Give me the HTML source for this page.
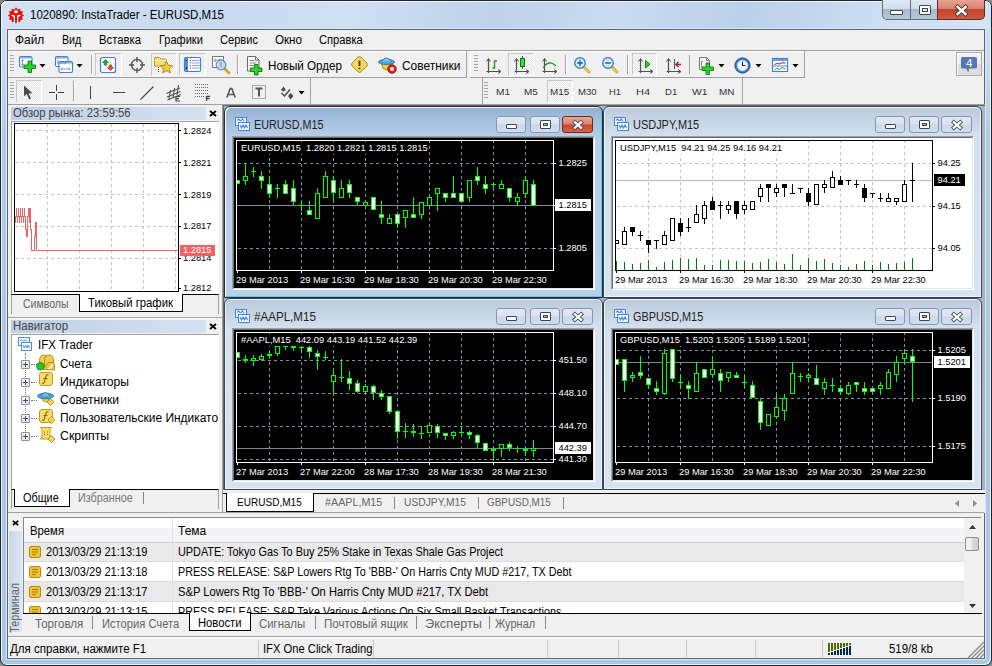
<!DOCTYPE html><html><head><meta charset="utf-8"><style>
html,body{margin:0;padding:0;width:992px;height:666px;overflow:hidden;background:#8a8a8a;}
body{position:relative;font-family:"Liberation Sans",sans-serif;font-size:11px;color:#000;}
div{position:absolute;box-sizing:border-box;}
.t{white-space:nowrap;line-height:13px;}
svg{position:absolute;overflow:visible;}
</style></head><body>
<div style="left:0px;top:0px;width:992px;height:666px;background:linear-gradient(#d0e1f3 0px,#c8dbf0 60px,#afcae7 140px,#abc7e5 100%);border:1px solid #1b2432;border-radius:7px;box-shadow:inset 1px 1px 0 #eef6fd,inset -1px -1px 0 #eef6fd;"></div>
<div style="left:1px;top:1px;width:990px;height:28px;background:linear-gradient(100deg,#d2e2f4 0%,#c6d9ef 20%,#cfe0f3 35%,#bcd2eb 50%,#c9dcf1 62%,#b9d0ea 75%,#cde0f4 90%,#d3e4f6 100%);border-radius:6px 6px 0 0;box-shadow:inset 1px 1px 0 #f4f8fc;"></div>
<svg style="left:7px;top:6px" width="18" height="19" viewBox="0 0 18 19">
<polygon points="9.00,1.30 10.60,3.51 13.10,2.40 13.38,5.12 16.10,5.40 14.99,7.90 17.20,9.50 14.99,11.10 16.10,13.60 13.38,13.88 13.10,16.60 10.60,15.49 9.00,17.70 7.40,15.49 4.90,16.60 4.62,13.88 1.90,13.60 3.01,11.10 0.80,9.50 3.01,7.90 1.90,5.40 4.62,5.12 4.90,2.40 7.40,3.51" fill="#e8140c"/>
<ellipse cx="9" cy="5.6" rx="1.9" ry="1.7" fill="#fff"/>
<path d="M3.8 9.2 Q6.5 8.2 8 10 V17 H6.8 V11.5 Q5.8 10.2 3.8 9.2 Z M14.2 9.2 Q11.5 8.2 10 10 V17 H11.2 V11.5 Q12.2 10.2 14.2 9.2 Z" fill="#fff"/>
</svg>
<div class="t" style="left:30px;top:8px;font-size:12px;line-height:14px;color:#000;transform:scaleX(0.9589);transform-origin:0 0;">1020890: InstaTrader - EURUSD,M15</div>
<div style="left:882px;top:0px;width:56px;height:20px;background:linear-gradient(#dfe9f5 0%,#cfdcec 45%,#a8b9cd 50%,#b8c8da 100%);border:1px solid #5f6e80;border-top:none;border-radius:0 0 0 5px;"></div>
<div style="left:910px;top:0px;width:1px;height:19px;background:#5f6e80"></div>
<div style="left:890px;top:10px;width:13px;height:5px;background:#fff;border:1px solid #3b4556;border-radius:1px"></div>
<div style="left:919px;top:5px;width:12px;height:10px;background:#fff;border:1px solid #3b4556;border-radius:1px"></div>
<div style="left:922px;top:8px;width:6px;height:4px;background:#dfe8f4;border:1px solid #3b4556;"></div>
<div style="left:937px;top:0px;width:48px;height:20px;background:linear-gradient(#e8a395 0%,#d9826f 45%,#c4432a 50%,#d05a3f 100%);border:1px solid #5f2e24;border-top:none;border-radius:0 0 5px 0;"></div>
<svg style="left:955px;top:5px" width="13" height="11" viewBox="0 0 13 11">
<path d="M2.5 2 L10.5 9 M10.5 2 L2.5 9" stroke="#3a3a3a" stroke-width="4.2" stroke-linecap="square"/>
<path d="M2.5 2 L10.5 9 M10.5 2 L2.5 9" stroke="#fff" stroke-width="2.4" stroke-linecap="square"/></svg>
<div style="left:6px;top:28px;width:980px;height:632px;border:1px solid #dbe8f6;"></div>
<div style="left:7px;top:29px;width:978px;height:630px;background:#f0f0f0;border:1px solid #5b6777;"></div>
<div style="left:983px;top:105px;width:1px;height:385px;background:#fff"></div>
<div class="t" style="left:15px;top:33px;font-size:12px;line-height:14px;transform:scaleX(0.9898);transform-origin:0 0;">Файл</div>
<div class="t" style="left:62px;top:33px;font-size:12px;line-height:14px;transform:scaleX(0.8844);transform-origin:0 0;">Вид</div>
<div class="t" style="left:99px;top:33px;font-size:12px;line-height:14px;transform:scaleX(0.9417);transform-origin:0 0;">Вставка</div>
<div class="t" style="left:158.5px;top:33px;font-size:12px;line-height:14px;transform:scaleX(0.9182);transform-origin:0 0;">Графики</div>
<div class="t" style="left:219.5px;top:33px;font-size:12px;line-height:14px;transform:scaleX(0.9247);transform-origin:0 0;">Сервис</div>
<div class="t" style="left:274.5px;top:33px;font-size:12px;line-height:14px;transform:scaleX(0.9683);transform-origin:0 0;">Окно</div>
<div class="t" style="left:318.5px;top:33px;font-size:12px;line-height:14px;transform:scaleX(0.9283);transform-origin:0 0;">Справка</div>
<div style="left:8px;top:50px;width:976px;height:1px;background:#a0a0a0"></div>
<div style="left:8px;top:104px;width:976px;height:1px;background:#a0a0a0"></div>
<div style="left:8px;top:51px;width:459px;height:27px;border-right:1px solid #a0a0a0;border-bottom:1px solid #a0a0a0;box-shadow:inset 1px 1px 0 #fff;"></div>
<div style="left:10px;top:55px;width:4px;height:18px"><div style="left:0;top:0px;width:4px;height:1px;background:#a5a5a5"></div><div style="left:0;top:3px;width:4px;height:1px;background:#a5a5a5"></div><div style="left:0;top:6px;width:4px;height:1px;background:#a5a5a5"></div><div style="left:0;top:9px;width:4px;height:1px;background:#a5a5a5"></div><div style="left:0;top:12px;width:4px;height:1px;background:#a5a5a5"></div><div style="left:0;top:15px;width:4px;height:1px;background:#a5a5a5"></div></div>
<svg style="left:19px;top:56px" width="19" height="18" viewBox="0 0 19 18">
<rect x="0.5" y="0.5" width="12.5" height="10.5" rx="1.5" fill="#fff" stroke="#3b7fd6" stroke-width="1.1"/>
<rect x="1" y="1" width="11.5" height="1.6" fill="#8ab6ea"/>
<path d="M3.5 3.5 v6 M2.3 4.8 l1.2-1.3 1.2 1.3 M2.3 8.2 l1.2 1.3 1.2-1.3" stroke="#7a8aa0" stroke-width=".9" fill="none"/>
<path d="M9 5 h3.5 v4 h4 v3.5 h-4 v4 h-3.5 v-4 h-4 v-3.5 h4 z" fill="#2fd02f" stroke="#0e7a0e" stroke-width=".9"/>
</svg>
<svg style="left:39px;top:64px" width="7" height="4"><path d="M0.5 0 L6.5 0 L3.5 3.5 Z" fill="#000"/></svg>
<svg style="left:55px;top:56px" width="19" height="18" viewBox="0 0 19 18">
<rect x="0.5" y="0.5" width="12.5" height="10" rx="1.5" fill="#fff" stroke="#3b7fd6" stroke-width="1.1"/>
<rect x="1" y="1" width="11.5" height="1.6" fill="#8ab6ea"/>
<rect x="4" y="5.5" width="13.5" height="11" rx="1.5" fill="#fff" stroke="#3b7fd6" stroke-width="1.1"/>
<rect x="4.5" y="6" width="12.5" height="1.6" fill="#8ab6ea"/>
<path d="M3 3.5 v4 M2 7 h9 M9.5 5.8 l1.5 1.2 -1.5 1.2" stroke="#7a8aa0" stroke-width=".9" fill="none"/>
<path d="M6 13 h9 M7.2 11.8 l-1.2 1.2 1.2 1.2 M13.8 11.8 l1.2 1.2 -1.2 1.2" stroke="#7a8aa0" stroke-width=".9" fill="none"/>
</svg>
<svg style="left:76px;top:64px" width="7" height="4"><path d="M0.5 0 L6.5 0 L3.5 3.5 Z" fill="#000"/></svg>
<div style="left:91px;top:55px;width:1px;height:19px;background:#a0a0a0"></div>
<div style="left:92px;top:55px;width:1px;height:19px;background:#fff"></div>
<div style="left:95px;top:53px;width:27px;height:23px;background:#f7f7f7;border:1px solid #c8c8c8;border-right-color:#fff;border-bottom-color:#fff;background-image:repeating-conic-gradient(#e6e6e6 0 25%,#fbfbfb 0 50%);background-size:2px 2px;"></div>
<svg style="left:100px;top:57px" width="16" height="16" viewBox="0 0 16 16">
<rect x="0.5" y="0.5" width="15" height="15" rx="2" fill="#fff" stroke="#3b7fd6" stroke-width="1.2"/>
<path d="M3 6 h9 M3 9 h9 M3 12 h9" stroke="#dde6f0" stroke-width="1"/>
<path d="M5.5 2.5 L8.5 5.5 H6.7 V8 H4.3 V5.5 H2.5 Z" fill="#22b022" stroke="#107a10" stroke-width=".7"/>
<path d="M10.5 13.5 L13.5 10.5 H11.7 V8 H9.3 V10.5 H7.5 Z" fill="#e8502a" stroke="#b02a10" stroke-width=".7"/>
</svg>
<svg style="left:128px;top:56px" width="18" height="18" viewBox="0 0 18 18">
<circle cx="9" cy="9" r="5.5" fill="none" stroke="#555" stroke-width="1.4"/>
<path d="M9 1 V6 M9 12 V17 M1 9 H6 M12 9 H17" stroke="#555" stroke-width="1.4"/></svg>
<div style="left:151px;top:53px;width:26px;height:23px;background:#f7f7f7;border:1px solid #c8c8c8;border-right-color:#fff;border-bottom-color:#fff;background-image:repeating-conic-gradient(#e6e6e6 0 25%,#fbfbfb 0 50%);background-size:2px 2px;"></div>
<svg style="left:154px;top:55px" width="20" height="20" viewBox="0 0 20 20">
<path d="M0.5 2.5 h5 l1.5 1.5 h5 v7 h-11.5 z" fill="#f6dc7a" stroke="#c59a2c" stroke-width="1"/>
<path d="M0.5 5.5 h11.5" stroke="#fff3c0" stroke-width="1"/>
<path d="M4.5 12 v6" stroke="#333" stroke-width="1" stroke-dasharray="1 1"/>
<path d="M12.5 6.5 l1.9 3.8 4.2 .5 -3.1 2.9 .8 4.1 -3.8-2.1 -3.8 2.1 .8-4.1 -3.1-2.9 4.2-.5z" fill="#f2cd3a" stroke="#a8800e" stroke-width=".9"/>
</svg>
<div style="left:179px;top:53px;width:27px;height:23px;background:#f7f7f7;border:1px solid #c8c8c8;border-right-color:#fff;border-bottom-color:#fff;background-image:repeating-conic-gradient(#e6e6e6 0 25%,#fbfbfb 0 50%);background-size:2px 2px;"></div>
<svg style="left:184px;top:57px" width="18" height="16" viewBox="0 0 18 16">
<rect x="0.5" y="0.5" width="16" height="14" rx="1.5" fill="#fff" stroke="#3d7fd2" stroke-width="1.2"/>
<rect x="1" y="1" width="3" height="13" fill="#4d8ee0"/>
<path d="M2.5 3 v1 M2.5 10 v2" stroke="#222" stroke-width="1"/>
<path d="M6 3.5 h1 M6 6 h1 M6 8.5 h1 M6 11 h1" stroke="#d22" stroke-width="1.2"/>
<path d="M8 3.5 h7.5 M8 6 h7.5 M8 8.5 h7.5 M8 11 h7.5" stroke="#7fa6d6" stroke-width="1"/></svg>
<svg style="left:212px;top:56px" width="19" height="19" viewBox="0 0 19 19">
<rect x="0.5" y="0.5" width="11" height="11" fill="#fff" stroke="#777" stroke-width="1"/>
<path d="M3 2.5 v4 M8 2.5 v4 M2.5 4 h7" stroke="#777" stroke-width=".8"/>
<path d="M12.5 12.5 L17 17" stroke="#d4a017" stroke-width="2.6" stroke-linecap="round"/>
<circle cx="9" cy="9" r="4.8" fill="#cfe4f7" fill-opacity=".8" stroke="#4f8fd6" stroke-width="1.3"/>
<rect x="7.5" y="6" width="2.5" height="5" fill="#8fb0d0"/></svg>
<div style="left:237px;top:55px;width:1px;height:19px;background:#a0a0a0"></div>
<div style="left:238px;top:55px;width:1px;height:19px;background:#fff"></div>
<svg style="left:247px;top:56px" width="17" height="19" viewBox="0 0 17 19">
<path d="M0.5 0.5 h8 l3.5 3.5 v11 h-11.5 z" fill="#fafafa" stroke="#6a6a6a" stroke-width="1"/>
<path d="M8.5 0.5 v3.5 h3.5" stroke="#6a6a6a" fill="none"/>
<path d="M2.5 4.5 h5 M2.5 7 h7 M2.5 9.5 h4" stroke="#8a8a8a" stroke-width="1"/>
<path d="M7.5 8.5 h3.5 v3.5 h4 v3.5 h-4 v3.5 h-3.5 v-3.5 h-4 v-3.5 h4 z" fill="#2fcf2f" stroke="#0e7a0e" stroke-width=".9"/></svg>
<div class="t" style="left:267.5px;top:59px;font-size:12px;line-height:14px;transform:scaleX(0.9678);transform-origin:0 0;">Новый Ордер</div>
<svg style="left:351px;top:56px" width="17" height="17" viewBox="0 0 17 17">
<path d="M7 1.2 Q8.5 0 10 1.2 L15.8 7 Q17 8.5 15.8 10 L10 15.8 Q8.5 17 7 15.8 L1.2 10 Q0 8.5 1.2 7 Z" fill="#f6d85a" stroke="#a98512" stroke-width="1"/>
<path d="M8.5 4.5 V10" stroke="#3a3a3a" stroke-width="1.8"/><path d="M8.5 11.6 V13.2" stroke="#3a3a3a" stroke-width="1.8"/></svg>
<svg style="left:378px;top:55px" width="19" height="19" viewBox="0 0 19 19">
<path d="M3.5 8.5 h11 l-1.5 5 q-4 3 -8 0z" fill="#f5d245" stroke="#a98512" stroke-width=".9"/>
<ellipse cx="8.5" cy="7" rx="8" ry="2.6" fill="#4aa3dc" stroke="#1d6aa0" stroke-width=".8"/>
<path d="M3.5 6.5 q5-7 10 0" fill="#7cc4f0" stroke="#1d6aa0" stroke-width=".8"/>
<circle cx="14" cy="14" r="4.3" fill="#e01e1e" stroke="#9a1010" stroke-width=".8"/>
<rect x="12.3" y="12.3" width="3.4" height="3.4" fill="#fff"/></svg>
<div class="t" style="left:402px;top:59px;font-size:12px;line-height:14px;transform:scaleX(0.9943);transform-origin:0 0;">Советники</div>
<div style="left:470px;top:51px;width:335px;height:27px;border-right:1px solid #a0a0a0;border-bottom:1px solid #a0a0a0;box-shadow:inset 1px 1px 0 #fff;"></div>
<div style="left:474px;top:55px;width:4px;height:18px"><div style="left:0;top:0px;width:4px;height:1px;background:#a5a5a5"></div><div style="left:0;top:3px;width:4px;height:1px;background:#a5a5a5"></div><div style="left:0;top:6px;width:4px;height:1px;background:#a5a5a5"></div><div style="left:0;top:9px;width:4px;height:1px;background:#a5a5a5"></div><div style="left:0;top:12px;width:4px;height:1px;background:#a5a5a5"></div><div style="left:0;top:15px;width:4px;height:1px;background:#a5a5a5"></div></div>
<svg style="left:486px;top:58px" width="16" height="16" viewBox="0 0 16 16">
<path d="M2.5 1 V15 M0.5 13.5 H14" stroke="#505050" stroke-width="1.2" fill="none"/>
<path d="M0.5 3.5 L2.5 0.5 L4.5 3.5 M12 11.5 L15 13.5 L12 15.5" stroke="#505050" stroke-width="1" fill="none"/></svg>
<svg style="left:492px;top:60px" width="6" height="9"><path d="M0.5 8 H2.5 V1 H5" stroke="#1f9a1f" stroke-width="1.4" fill="none"/></svg>
<div style="left:508px;top:53px;width:26px;height:23px;background:#f7f7f7;border:1px solid #c8c8c8;border-right-color:#fff;border-bottom-color:#fff;background-image:repeating-conic-gradient(#e6e6e6 0 25%,#fbfbfb 0 50%);background-size:2px 2px;"></div>
<svg style="left:514px;top:58px" width="16" height="16" viewBox="0 0 16 16">
<path d="M2.5 1 V15 M0.5 13.5 H14" stroke="#505050" stroke-width="1.2" fill="none"/>
<path d="M0.5 3.5 L2.5 0.5 L4.5 3.5 M12 11.5 L15 13.5 L12 15.5" stroke="#505050" stroke-width="1" fill="none"/></svg>
<svg style="left:519px;top:56px" width="7" height="14"><path d="M3.5 0 V13" stroke="#0d7a0d" stroke-width="1"/><rect x="1.5" y="2.5" width="4" height="8" fill="#3fdc3f" stroke="#0d7a0d" stroke-width="1"/></svg>
<svg style="left:542px;top:58px" width="16" height="16" viewBox="0 0 16 16">
<path d="M2.5 1 V15 M0.5 13.5 H14" stroke="#505050" stroke-width="1.2" fill="none"/>
<path d="M0.5 3.5 L2.5 0.5 L4.5 3.5 M12 11.5 L15 13.5 L12 15.5" stroke="#505050" stroke-width="1" fill="none"/></svg>
<svg style="left:542px;top:61px" width="15" height="8"><path d="M1 7 Q7 -2 14 5" stroke="#2a9a2a" stroke-width="1.3" fill="none"/></svg>
<div style="left:565px;top:55px;width:1px;height:19px;background:#a0a0a0"></div>
<div style="left:566px;top:55px;width:1px;height:19px;background:#fff"></div>
<svg style="left:574px;top:57px" width="17" height="17" viewBox="0 0 17 17">
<path d="M9.5 9.5 L15 15" stroke="#c89a10" stroke-width="2.8" stroke-linecap="round"/>
<path d="M9.5 9.5 L15 15" stroke="#f2d250" stroke-width="1.2" stroke-linecap="round"/>
<circle cx="6" cy="6" r="5.2" fill="#d8ecfc" stroke="#3b7fd0" stroke-width="1.4"/><path d="M3.3 6 H8.7 M6 3.3 V8.7" stroke="#2f72c0" stroke-width="1.8"/></svg>
<svg style="left:602px;top:57px" width="17" height="17" viewBox="0 0 17 17">
<path d="M9.5 9.5 L15 15" stroke="#c89a10" stroke-width="2.8" stroke-linecap="round"/>
<path d="M9.5 9.5 L15 15" stroke="#f2d250" stroke-width="1.2" stroke-linecap="round"/>
<circle cx="6" cy="6" r="5.2" fill="#d8ecfc" stroke="#3b7fd0" stroke-width="1.4"/><path d="M3.3 6 H8.7" stroke="#2f72c0" stroke-width="1.8"/></svg>
<div style="left:627px;top:55px;width:1px;height:19px;background:#a0a0a0"></div>
<div style="left:628px;top:55px;width:1px;height:19px;background:#fff"></div>
<div style="left:632px;top:53px;width:25px;height:22px;background:#f7f7f7;border:1px solid #c8c8c8;border-right-color:#fff;border-bottom-color:#fff;background-image:repeating-conic-gradient(#e6e6e6 0 25%,#fbfbfb 0 50%);background-size:2px 2px;"></div>
<svg style="left:638px;top:58px" width="16" height="16" viewBox="0 0 16 16">
<path d="M2.5 1 V15 M0.5 13.5 H14" stroke="#505050" stroke-width="1.2" fill="none"/>
<path d="M0.5 3.5 L2.5 0.5 L4.5 3.5 M12 11.5 L15 13.5 L12 15.5" stroke="#505050" stroke-width="1" fill="none"/></svg>
<svg style="left:645px;top:60px" width="6" height="9"><path d="M0.5 0.5 L5 4.2 L0.5 8 Z" fill="#30d030" stroke="#108a10" stroke-width="1"/></svg>
<svg style="left:666px;top:58px" width="16" height="16" viewBox="0 0 16 16">
<path d="M2.5 1 V15 M0.5 13.5 H14" stroke="#505050" stroke-width="1.2" fill="none"/>
<path d="M0.5 3.5 L2.5 0.5 L4.5 3.5 M12 11.5 L15 13.5 L12 15.5" stroke="#505050" stroke-width="1" fill="none"/></svg>
<div style="left:674px;top:59px;width:1px;height:10px;background:#1f5f9a"></div>
<svg style="left:675px;top:61px" width="6" height="7"><path d="M6 3.5 H1.5 M3.5 1 L0.8 3.5 L3.5 6" stroke="#d01818" stroke-width="1.4" fill="none"/></svg>
<div style="left:689px;top:55px;width:1px;height:19px;background:#a0a0a0"></div>
<div style="left:690px;top:55px;width:1px;height:19px;background:#fff"></div>
<svg style="left:699px;top:57px" width="17" height="18" viewBox="0 0 17 18">
<path d="M0.5 0.5 h7 l3 3 v9 h-10 z" fill="#fafafa" stroke="#777" stroke-width="1"/>
<path d="M7.5 0.5 v3 h3" stroke="#777" fill="none"/>
<path d="M2.5 4 v6 M2 4.5 h2" stroke="#888" stroke-width=".9"/>
<path d="M7 6 h3.5 v4 h4 v3.5 h-4 v4 h-3.5 v-4 h-4 v-3.5 h4 z" fill="#2fcf2f" stroke="#0e7a0e" stroke-width=".9"/></svg>
<svg style="left:718px;top:64px" width="7" height="4"><path d="M0.5 0 L6.5 0 L3.5 3.5 Z" fill="#000"/></svg>
<svg style="left:734px;top:57px" width="17" height="17" viewBox="0 0 17 17">
<circle cx="8.5" cy="8.5" r="7.6" fill="#2f7ad0" stroke="#164e8e" stroke-width="1"/>
<circle cx="8.5" cy="8.5" r="5.4" fill="#f4f8fc" stroke="#9cc4ee" stroke-width=".8"/>
<path d="M8.5 4.5 V8.5 H11.5" stroke="#222" stroke-width="1.1" fill="none"/></svg>
<svg style="left:755px;top:64px" width="7" height="4"><path d="M0.5 0 L6.5 0 L3.5 3.5 Z" fill="#000"/></svg>
<svg style="left:772px;top:58px" width="17" height="15" viewBox="0 0 17 15">
<rect x="0.5" y="0.5" width="15" height="13" fill="#fff" stroke="#3d7fd2" stroke-width="1.1"/>
<rect x="1" y="1" width="14" height="2" fill="#6aa0e0"/>
<path d="M1 8 H15" stroke="#3d7fd2" stroke-width=".9"/>
<path d="M2.5 6.5 L5 5.5 L7.5 6 L10 4.8 L13.5 5" stroke="#b01818" stroke-width="1" fill="none"/>
<path d="M2.5 11.5 L5 10.5 L7.5 11.5 L10 9.5 L13.5 11" stroke="#2aa02a" stroke-width="1" fill="none"/></svg>
<svg style="left:792px;top:64px" width="7" height="4"><path d="M0.5 0 L6.5 0 L3.5 3.5 Z" fill="#000"/></svg>
<div style="left:956px;top:52px;width:26px;height:24px;background:linear-gradient(#f2f2f2 0%,#ededed 50%,#dcdcdc 51%,#e0e0e0 100%);border:1px solid #a9a9a9;box-shadow:inset 1px 1px 0 #fff;"></div>
<svg style="left:961px;top:57px" width="17" height="16" viewBox="0 0 17 16">
<path d="M1.5 0 H14.5 Q16 0 16 1.5 V10 Q16 11.5 14.5 11.5 H8 L7.5 15.5 L5 11.5 H1.5 Q0 11.5 0 10 V1.5 Q0 0 1.5 0 Z" fill="#5876b4"/></svg>
<div class="t" style="left:966px;top:57px;color:#fff;font-size:11.5px;line-height:12px;">4</div>
<div style="left:8px;top:78px;width:303px;height:26px;border-right:1px solid #a0a0a0;"></div>
<div style="left:10px;top:82px;width:4px;height:18px"><div style="left:0;top:0px;width:4px;height:1px;background:#a5a5a5"></div><div style="left:0;top:3px;width:4px;height:1px;background:#a5a5a5"></div><div style="left:0;top:6px;width:4px;height:1px;background:#a5a5a5"></div><div style="left:0;top:9px;width:4px;height:1px;background:#a5a5a5"></div><div style="left:0;top:12px;width:4px;height:1px;background:#a5a5a5"></div><div style="left:0;top:15px;width:4px;height:1px;background:#a5a5a5"></div></div>
<div style="left:16px;top:80px;width:26px;height:23px;background:#f7f7f7;border:1px solid #c8c8c8;border-right-color:#fff;border-bottom-color:#fff;background-image:repeating-conic-gradient(#e6e6e6 0 25%,#fbfbfb 0 50%);background-size:2px 2px;"></div>
<svg style="left:23px;top:85px" width="11" height="15" viewBox="0 0 11 15">
<path d="M1 0.5 L1 11.5 L3.6 9 L6.2 14.5 L8 13.6 L5.6 8.4 L9.5 8.2 Z" fill="#4a4a4a"/></svg>
<div style="left:56px;top:85px;width:1px;height:6px;background:#3c3c3c"></div>
<div style="left:56px;top:94px;width:1px;height:6px;background:#3c3c3c"></div>
<div style="left:49px;top:92px;width:6px;height:1px;background:#3c3c3c"></div>
<div style="left:58px;top:92px;width:6px;height:1px;background:#3c3c3c"></div>
<div style="left:73px;top:81px;width:1px;height:20px;background:#a0a0a0"></div>
<div style="left:74px;top:81px;width:1px;height:20px;background:#fff"></div>
<div style="left:90px;top:86px;width:1px;height:13px;background:#444"></div>
<div style="left:113px;top:92px;width:12px;height:1px;background:#444"></div>
<svg style="left:140px;top:86px" width="14" height="14"><path d="M0.5 13.5 L13.5 0.5" stroke="#444" stroke-width="1.1"/></svg>
<svg style="left:166px;top:84px" width="18" height="18" viewBox="0 0 18 18">
<path d="M0.5 9.5 L14 4 M1 13 L14.5 7.5 M1.5 16 L15 10.5" stroke="#505050" stroke-width="1.1"/>
<path d="M4.5 6 L3 15 M8.5 4 L7 14 M12.5 1 L11 11" stroke="#505050" stroke-width="1.1"/>
<path d="M10 12.5 h4 M10 12.5 v4.5 h4 M10 14.7 h3" stroke="#444" stroke-width="1.2" fill="none"/></svg>
<svg style="left:195px;top:84px" width="16" height="18" viewBox="0 0 16 18">
<path d="M0 0.5 H14 M0 3.5 H14 M0 6.5 H14 M0 9.5 H14 M0 12.5 H10" stroke="#6a6a6a" stroke-width="1" stroke-dasharray="1 1"/>
<path d="M11.5 12 v5 M11.5 12.5 h3.5 M11.5 14.7 h3" stroke="#444" stroke-width="1.3" fill="none"/></svg>
<svg style="left:226px;top:88px" width="10" height="10" viewBox="0 0 10 10">
<path d="M0.8 9.5 L4.2 0.5 H5.8 L9.2 9.5 M2.3 6.5 H7.7" stroke="#555" stroke-width="1.6" fill="none"/></svg>
<svg style="left:252px;top:85px" width="14" height="15" viewBox="0 0 14 15">
<rect x="0.5" y="0.5" width="13" height="13" fill="none" stroke="#666" stroke-width="1" stroke-dasharray="1 1"/>
<path d="M3.5 3.5 H10.5 M7 3.5 V11.5" stroke="#555" stroke-width="2"/></svg>
<svg style="left:280px;top:86px" width="15" height="14" viewBox="0 0 15 14">
<path d="M1 4 L3.5 0.5 L6 4 L3.5 5.5 Z M8 10 L10.5 7 L13.5 10 L10.5 13.5 Z" fill="#4a4a4a"/>
<path d="M1.5 7 L4.5 10 L10 3.5" stroke="#4a4a4a" stroke-width="1.5" fill="none"/></svg>
<svg style="left:298px;top:91px" width="7" height="4"><path d="M0.5 0 L6.5 0 L3.5 3.5 Z" fill="#000"/></svg>
<div style="left:482px;top:78px;width:261px;height:26px;border-left:1px solid #a0a0a0;border-right:1px solid #a0a0a0;"></div>
<div style="left:484px;top:82px;width:4px;height:18px"><div style="left:0;top:0px;width:4px;height:1px;background:#a5a5a5"></div><div style="left:0;top:3px;width:4px;height:1px;background:#a5a5a5"></div><div style="left:0;top:6px;width:4px;height:1px;background:#a5a5a5"></div><div style="left:0;top:9px;width:4px;height:1px;background:#a5a5a5"></div><div style="left:0;top:12px;width:4px;height:1px;background:#a5a5a5"></div><div style="left:0;top:15px;width:4px;height:1px;background:#a5a5a5"></div></div>
<div style="left:547px;top:80px;width:26px;height:23px;background:#f7f7f7;border:1px solid #c8c8c8;border-right-color:#fff;border-bottom-color:#fff;background-image:repeating-conic-gradient(#e6e6e6 0 25%,#fbfbfb 0 50%);background-size:2px 2px;"></div>
<div class="t" style="left:495.7px;top:86px;font-size:9.8px;line-height:12px;color:#333;transform:scaleX(1.0357);transform-origin:0 0;">M1</div>
<div class="t" style="left:524.0px;top:86px;font-size:9.8px;line-height:12px;color:#333;transform:scaleX(1.0136);transform-origin:0 0;">M5</div>
<div class="t" style="left:549.7px;top:86px;font-size:9.8px;line-height:12px;color:#333;transform:scaleX(1.0018);transform-origin:0 0;">M15</div>
<div class="t" style="left:577.5px;top:86px;font-size:9.8px;line-height:12px;color:#333;transform:scaleX(0.9809);transform-origin:0 0;">M30</div>
<div class="t" style="left:609.2px;top:86px;font-size:9.8px;line-height:12px;color:#333;transform:scaleX(0.9579);transform-origin:0 0;">H1</div>
<div class="t" style="left:635.9000000000001px;top:86px;font-size:9.8px;line-height:12px;color:#333;transform:scaleX(1.1255);transform-origin:0 0;">H4</div>
<div class="t" style="left:664.8000000000001px;top:86px;font-size:9.8px;line-height:12px;color:#333;transform:scaleX(0.9738);transform-origin:0 0;">D1</div>
<div class="t" style="left:692.2px;top:86px;font-size:9.8px;line-height:12px;color:#333;transform:scaleX(1.0544);transform-origin:0 0;">W1</div>
<div class="t" style="left:719.2px;top:86px;font-size:9.8px;line-height:12px;color:#333;transform:scaleX(1.0170);transform-origin:0 0;">MN</div>
<div style="left:8px;top:105px;width:214px;height:405px;background:#f0f0f0;"></div>
<div style="left:11px;top:107px;width:195px;height:13px;background:linear-gradient(90deg,#bed0e6,#d5e2f0);"></div>
<div class="t" style="left:12.5px;top:106px;font-size:12px;line-height:14px;color:#444;transform:scaleX(0.9364);transform-origin:0 0;">Обзор рынка: 23:59:56</div>
<svg style="left:209px;top:110px" width="8" height="7"><path d="M1 1 L7 6 M7 1 L1 6" stroke="#000" stroke-width="1.8"/></svg>
<div style="left:11px;top:121px;width:208px;height:173px;background:#fff;border-left:1px solid #a0a0a0;border-top:1px solid #a0a0a0;"></div>
<div class="t" style="left:17px;top:126px;font-size:9.3px;line-height:12px;transform:scaleX(0.9880);transform-origin:0 0;">EURUSD</div>
<div style="left:14px;top:123px;width:165px;height:169px;border:1px solid #000;background:#fff"></div>
<svg style="left:0px;top:0px" width="200" height="300">
<line x1="47.5" y1="124" x2="47.5" y2="290" stroke="#c4c4c4" stroke-dasharray="3 3"/>
<line x1="79.5" y1="124" x2="79.5" y2="290" stroke="#c4c4c4" stroke-dasharray="3 3"/>
<line x1="111.5" y1="124" x2="111.5" y2="290" stroke="#c4c4c4" stroke-dasharray="3 3"/>
<line x1="143.5" y1="124" x2="143.5" y2="290" stroke="#c4c4c4" stroke-dasharray="3 3"/>
<line x1="175.5" y1="124" x2="175.5" y2="290" stroke="#c4c4c4" stroke-dasharray="3 3"/>
<line x1="15" y1="130.5" x2="178" y2="130.5" stroke="#c4c4c4" stroke-dasharray="3 3"/>
<line x1="15" y1="162.5" x2="178" y2="162.5" stroke="#c4c4c4" stroke-dasharray="3 3"/>
<line x1="15" y1="194.5" x2="178" y2="194.5" stroke="#c4c4c4" stroke-dasharray="3 3"/>
<line x1="15" y1="226.5" x2="178" y2="226.5" stroke="#c4c4c4" stroke-dasharray="3 3"/>
<line x1="15" y1="258.5" x2="178" y2="258.5" stroke="#c4c4c4" stroke-dasharray="3 3"/>
<rect x="15" y="216" width="11" height="1" fill="#f26161"/>
<rect x="16" y="208" width="1" height="9" fill="#f26161"/>
<rect x="18" y="208" width="1" height="9" fill="#f26161"/>
<rect x="20" y="208" width="1" height="9" fill="#f26161"/>
<rect x="22" y="208" width="1" height="9" fill="#f26161"/>
<rect x="24" y="208" width="1" height="9" fill="#f26161"/>
<rect x="15" y="216" width="1" height="7" fill="#f26161"/>
<rect x="17" y="216" width="1" height="7" fill="#f26161"/>
<rect x="19" y="216" width="1" height="7" fill="#f26161"/>
<rect x="21" y="216" width="1" height="7" fill="#f26161"/>
<rect x="23" y="216" width="1" height="7" fill="#f26161"/>
<rect x="25" y="216" width="1" height="14" fill="#f26161"/>
<rect x="25" y="229" width="2" height="1" fill="#f26161"/>
<rect x="26" y="229" width="1" height="8" fill="#f26161"/>
<rect x="27" y="216" width="1" height="21" fill="#f26161"/>
<rect x="28" y="208" width="1" height="9" fill="#f26161"/>
<rect x="29" y="208" width="1" height="15" fill="#f26161"/>
<rect x="30" y="208" width="1" height="22" fill="#f26161"/>
<rect x="31" y="229" width="1" height="22" fill="#f26161"/>
<rect x="31" y="250" width="4" height="1" fill="#f26161"/>
<rect x="34" y="236" width="1" height="15" fill="#f26161"/>
<rect x="35" y="222" width="1" height="15" fill="#f26161"/>
<rect x="36" y="222" width="1" height="29" fill="#f26161"/>
<rect x="36" y="250" width="142" height="1" fill="#f26161"/>
</svg>
<div class="t" style="left:183px;top:125px;font-size:9.3px;line-height:12px;">1.2824</div>
<div style="left:179px;top:130px;width:2px;height:1px;background:#000"></div>
<div class="t" style="left:183px;top:157px;font-size:9.3px;line-height:12px;">1.2821</div>
<div style="left:179px;top:162px;width:2px;height:1px;background:#000"></div>
<div class="t" style="left:183px;top:189px;font-size:9.3px;line-height:12px;">1.2819</div>
<div style="left:179px;top:194px;width:2px;height:1px;background:#000"></div>
<div class="t" style="left:183px;top:220px;font-size:9.3px;line-height:12px;">1.2817</div>
<div style="left:179px;top:226px;width:2px;height:1px;background:#000"></div>
<div class="t" style="left:183px;top:252px;font-size:9.3px;line-height:12px;">1.2814</div>
<div style="left:179px;top:258px;width:2px;height:1px;background:#000"></div>
<div class="t" style="left:183px;top:282px;font-size:9.3px;line-height:12px;">1.2812</div>
<div style="left:179px;top:288px;width:2px;height:1px;background:#000"></div>
<div style="left:180px;top:245px;width:35px;height:11px;background:#f26161;"></div>
<div class="t" style="left:183px;top:244px;font-size:9.3px;line-height:12px;color:#fff">1.2815</div>
<div style="left:11px;top:294px;width:208px;height:20px;background:#f0f0f0;border-top:1px solid #000;border-left:1px solid #a0a0a0;border-right:1px solid #a0a0a0;"></div>
<div style="left:79px;top:294px;width:104px;height:18px;background:#fff;border:1px solid #000;border-top:none;"></div>
<div class="t" style="left:23px;top:297px;font-size:12px;line-height:14px;color:#666;transform:scaleX(0.8767);transform-origin:0 0;">Символы</div>
<div class="t" style="left:87.5px;top:296px;font-size:12px;line-height:14px;transform:scaleX(0.9417);transform-origin:0 0;">Тиковый график</div>
<div style="left:8px;top:317px;width:214px;height:1px;background:#a0a0a0"></div>
<div style="left:8px;top:318px;width:214px;height:1px;background:#fff"></div>
<div style="left:11px;top:320px;width:195px;height:13px;background:linear-gradient(90deg,#bed0e6,#d5e2f0);"></div>
<div class="t" style="left:12.5px;top:319px;font-size:12px;line-height:14px;color:#444;transform:scaleX(0.9540);transform-origin:0 0;">Навигатор</div>
<svg style="left:209px;top:323px" width="8" height="7"><path d="M1 1 L7 6 M7 1 L1 6" stroke="#000" stroke-width="1.8"/></svg>
<div style="left:11px;top:334px;width:208px;height:155px;background:#fff;border-left:1px solid #a0a0a0;border-top:1px solid #a0a0a0;"></div>
<svg style="left:17px;top:336px" width="16" height="16" viewBox="0 0 16 16">
<rect x="1.5" y="1.5" width="11" height="8" fill="#fff" stroke="#4a90e2"/>
<path d="M3 5 l1.5-1.5 1.5 1.5 h1 l1.5-1.5 1.5 2" stroke="#4a90e2" fill="none" stroke-width="1"/>
<rect x="4.5" y="6.5" width="10" height="8" fill="#fff" stroke="#4a90e2"/>
<path d="M6 9 l1.3 3 1.3-3 1.3 3 1.3-3 1.3 3" stroke="#4a90e2" fill="none" stroke-width="1"/></svg>
<div class="t" style="left:38px;top:338px;font-size:12px;line-height:14px;transform:scaleX(0.9632);transform-origin:0 0;">IFX Trader</div>
<div style="left:25px;top:353px;width:1px;height:80px;border-left:1px dotted #777"></div>
<div style="left:21px;top:360px;width:9px;height:9px;border:1px solid #8f8f8f;background:linear-gradient(135deg,#fff,#e2e2e2);border-radius:1px;"></div>
<div style="left:23px;top:364px;width:5px;height:1px;background:#2a4f9a"></div>
<div style="left:25px;top:362px;width:1px;height:5px;background:#2a4f9a"></div>
<div style="left:31px;top:364px;width:6px;height:1px;border-top:1px dotted #777"></div>
<div class="t" style="left:60px;top:357px;font-size:12px;line-height:14px;transform:scaleX(0.9639);transform-origin:0 0;">Счета</div>
<div style="left:21px;top:378px;width:9px;height:9px;border:1px solid #8f8f8f;background:linear-gradient(135deg,#fff,#e2e2e2);border-radius:1px;"></div>
<div style="left:23px;top:382px;width:5px;height:1px;background:#2a4f9a"></div>
<div style="left:25px;top:380px;width:1px;height:5px;background:#2a4f9a"></div>
<div style="left:31px;top:382px;width:6px;height:1px;border-top:1px dotted #777"></div>
<div class="t" style="left:60px;top:375px;font-size:12px;line-height:14px;transform:scaleX(1.0130);transform-origin:0 0;">Индикаторы</div>
<div style="left:21px;top:396px;width:9px;height:9px;border:1px solid #8f8f8f;background:linear-gradient(135deg,#fff,#e2e2e2);border-radius:1px;"></div>
<div style="left:23px;top:400px;width:5px;height:1px;background:#2a4f9a"></div>
<div style="left:25px;top:398px;width:1px;height:5px;background:#2a4f9a"></div>
<div style="left:31px;top:400px;width:6px;height:1px;border-top:1px dotted #777"></div>
<div class="t" style="left:60px;top:393px;font-size:12px;line-height:14px;transform:scaleX(1.0062);transform-origin:0 0;">Советники</div>
<div style="left:21px;top:414px;width:9px;height:9px;border:1px solid #8f8f8f;background:linear-gradient(135deg,#fff,#e2e2e2);border-radius:1px;"></div>
<div style="left:23px;top:418px;width:5px;height:1px;background:#2a4f9a"></div>
<div style="left:25px;top:416px;width:1px;height:5px;background:#2a4f9a"></div>
<div style="left:31px;top:418px;width:6px;height:1px;border-top:1px dotted #777"></div>
<div class="t" style="left:60px;top:411px;font-size:12px;line-height:14px;transform:scaleX(0.9959);transform-origin:0 0;">Пользовательские Индикато</div>
<div style="left:21px;top:432px;width:9px;height:9px;border:1px solid #8f8f8f;background:linear-gradient(135deg,#fff,#e2e2e2);border-radius:1px;"></div>
<div style="left:23px;top:436px;width:5px;height:1px;background:#2a4f9a"></div>
<div style="left:25px;top:434px;width:1px;height:5px;background:#2a4f9a"></div>
<div style="left:31px;top:436px;width:6px;height:1px;border-top:1px dotted #777"></div>
<div class="t" style="left:60px;top:429px;font-size:12px;line-height:14px;transform:scaleX(1.0269);transform-origin:0 0;">Скрипты</div>
<svg style="left:36px;top:353px" width="20" height="18" viewBox="0 0 20 18">
<path d="M3.5 8 q0-6 4.5-6 q4.5 0 4.5 6 v4 h-9z" fill="#f1cd4b" stroke="#b08a10" stroke-width=".9"/>
<path d="M8.5 8 q0-6 4.5-6 q4.5 0 4.5 6 v5 h-9z" fill="#f1cd4b" stroke="#b08a10" stroke-width=".9"/>
<path d="M7 16.5 l5-7 h5 l1.5 2.5 v5z" fill="#e9c23d" stroke="#b08a10" stroke-width=".9"/>
<path d="M12 16 l4-5.5 1.5 1.5 -3 4z" fill="#fff6c8"/>
<ellipse cx="4.3" cy="13.3" rx="3.8" ry="3.7" fill="#2dc52d" stroke="#14861a" stroke-width=".8"/></svg>
<svg style="left:38px;top:371px" width="16" height="16" viewBox="0 0 16 16">
<rect x="1.5" y="1.5" width="13" height="13" rx="2.5" fill="#f7dc6c" stroke="#c49a1a"/>
<path d="M10.5 4 q-1.5-.8-2.3.8 l-2 6.5 q-.6 1.5-2 .9 M5.5 7.5 h4" stroke="#8a6200" stroke-width="1.1" fill="none"/></svg>
<svg style="left:36px;top:389px" width="20" height="18" viewBox="0 0 20 18">
<path d="M6 9 h7 l-1 3 q-2.5 2 -5 0z" fill="#f3d34a" stroke="#b08a10" stroke-width=".8"/>
<ellipse cx="9.5" cy="7" rx="8" ry="2.8" fill="#48a5dc" stroke="#1d6aa0" stroke-width=".8"/>
<path d="M5 7 q4.5-7 9 0" fill="#6ec0ee" stroke="#1d6aa0" stroke-width=".8"/>
<path d="M14.5 9.5 l3.5 3.5 -3.5 3.5 -3.5-3.5z" fill="#f4d35a" stroke="#b8900f" stroke-width=".9"/></svg>
<svg style="left:38px;top:408px" width="18" height="18" viewBox="0 0 18 18">
<rect x="1.5" y="1.5" width="13" height="13" rx="2.5" fill="#f7dc6c" stroke="#c49a1a"/>
<path d="M10.5 4 q-1.5-.8-2.3.8 l-2 6.5 q-.6 1.5-2 .9 M5.5 7.5 h4" stroke="#8a6200" stroke-width="1.1" fill="none"/>
<path d="M13.5 8.5 l3.5 3.5 -3.5 3.5 -3.5-3.5z" fill="#f4d35a" stroke="#b8900f" stroke-width=".9"/></svg>
<svg style="left:38px;top:426px" width="18" height="18" viewBox="0 0 18 18">
<path d="M2.5 1.5 h11 l-1.5 2 v7.5 l1.5 2 h-11 l1.5-2 v-7.5z" fill="#f7dc6c" stroke="#c49a1a"/>
<path d="M6 6 h1 M9 6 h1 M6 8.5 h1 M9 8.5 h1" stroke="#8a6a10" stroke-width="1"/>
<path d="M13.5 9.5 l3.5 3.5 -3.5 3.5 -3.5-3.5z" fill="#f4d35a" stroke="#b8900f" stroke-width=".9"/></svg>
<div style="left:11px;top:489px;width:208px;height:20px;background:#f0f0f0;border-top:1px solid #000;border-left:1px solid #a0a0a0;border-right:1px solid #a0a0a0;"></div>
<div style="left:14px;top:489px;width:56px;height:18px;background:#fff;border:1px solid #000;border-top:none;"></div>
<div class="t" style="left:23px;top:491px;font-size:12px;line-height:14px;transform:scaleX(0.9048);transform-origin:0 0;">Общие</div>
<div class="t" style="left:77.5px;top:491px;font-size:12px;line-height:14px;color:#777;transform:scaleX(0.8994);transform-origin:0 0;">Избранное</div>
<div style="left:143px;top:492px;width:1px;height:12px;background:#888"></div>
<div style="left:222px;top:104px;width:763px;height:386px;background:#aab5c3;border-left:1px solid #a0a0a0;border-top:1px solid #a0a0a0"></div>
<div style="left:223px;top:105px;width:762px;height:1px;background:#696969"></div>
<div style="left:223px;top:105px;width:1px;height:386px;background:#696969"></div>
<div style="left:224px;top:106px;width:379px;height:192px;background:linear-gradient(#93b0d2 0px,#a6c0de 14px,#b6cce7 29px,#bad0ea 100%);border:1px solid #1e2c3c;box-shadow:inset 1px 1px 0 #fff,inset -1px -1px 0 #4fd2f2;border-radius:6px 6px 0 0;"></div>
<svg style="left:235px;top:117px" width="16" height="15" viewBox="0 0 16 15">
<rect x="0.5" y="0.5" width="11" height="8" fill="#fff" stroke="#3b80f0"/>
<path d="M2 3.5 l1.5-1.5 1.5 1.5 h1 l1.5-1.5 1.5 2.5" stroke="#3b80f0" fill="none" stroke-width="1.1"/>
<rect x="3.5" y="5.5" width="11" height="8" fill="#fff" stroke="#3b80f0"/>
<path d="M5 8 l1.5 3 1.5-3 1.5 3 1.5-3 1.5 3" stroke="#3b80f0" fill="none" stroke-width="1.1"/></svg>
<div class="t" style="left:254px;top:118px;font-size:12px;line-height:14px;color:#222;transform:scaleX(0.8972);transform-origin:0 0;">EURUSD,M15</div>
<div style="left:496px;top:116px;width:30px;height:17px;background:linear-gradient(#e2eaf4 0%,#d7e2ef 48%,#c9d8ea 52%,#d2dfee 100%);border:1px solid #8797b0;border-radius:3px;"></div>
<div style="left:506px;top:124px;width:11px;height:5px;background:#fff;border:1px solid #3e4450;border-radius:1px;"></div>
<div style="left:530px;top:116px;width:30px;height:17px;background:linear-gradient(#e2eaf4 0%,#d7e2ef 48%,#c9d8ea 52%,#d2dfee 100%);border:1px solid #8797b0;border-radius:3px;"></div>
<div style="left:540px;top:120px;width:11px;height:9px;background:#fff;border:1px solid #3e4450;border-radius:1px;"></div>
<div style="left:543px;top:123px;width:5px;height:3px;background:#a9bfd8;border:1px solid #3e4450;"></div>
<div style="left:562px;top:116px;width:31px;height:17px;background:linear-gradient(#eaa798 0%,#dd8470 48%,#c9452b 52%,#d9654a 100%);border:1px solid #6e2a1e;border-radius:3px;"></div>
<svg style="left:572px;top:120px" width="12" height="10" viewBox="0 0 12 10">
<path d="M2.8 2.2 L9.2 7.8 M9.2 2.2 L2.8 7.8" stroke="#4a505c" stroke-width="4" stroke-linecap="square"/>
<path d="M2.8 2.2 L9.2 7.8 M9.2 2.2 L2.8 7.8" stroke="#fff" stroke-width="2.2" stroke-linecap="square"/></svg>
<div style="left:232px;top:136px;width:363px;height:154px;border-top:1px solid #a0a0a0;border-left:1px solid #a0a0a0;border-right:1px solid #fff;border-bottom:1px solid #fff;"></div>
<div style="left:233px;top:137px;width:361px;height:152px;background:#000;border-top:1px solid #696969;border-left:1px solid #696969;border-right:1px solid #e3e3e3;border-bottom:1px solid #e3e3e3;"></div>
<svg style="left:236px;top:140px" width="377" height="150">
<rect x="1" y="65" width="317" height="1" fill="#778899"/>
<line x1="33.5" y1="0" x2="33.5" y2="130" stroke="#8090a4" stroke-dasharray="3 3" />
<line x1="65.5" y1="0" x2="65.5" y2="130" stroke="#8090a4" stroke-dasharray="3 3" />
<line x1="97.5" y1="0" x2="97.5" y2="130" stroke="#8090a4" stroke-dasharray="3 3" />
<line x1="129.5" y1="0" x2="129.5" y2="130" stroke="#8090a4" stroke-dasharray="3 3" />
<line x1="161.5" y1="0" x2="161.5" y2="130" stroke="#8090a4" stroke-dasharray="3 3" />
<line x1="193.5" y1="0" x2="193.5" y2="130" stroke="#8090a4" stroke-dasharray="3 3" />
<line x1="225.5" y1="0" x2="225.5" y2="130" stroke="#8090a4" stroke-dasharray="3 3" />
<line x1="257.5" y1="0" x2="257.5" y2="130" stroke="#8090a4" stroke-dasharray="3 3" />
<line x1="289.5" y1="0" x2="289.5" y2="130" stroke="#8090a4" stroke-dasharray="3 3" />
<line x1="2" y1="23.5" x2="317" y2="23.5" stroke="#8090a4" stroke-dasharray="3 3" />
<line x1="317" y1="23.5" x2="320" y2="23.5" stroke="#fff" />
<line x1="2" y1="65.5" x2="317" y2="65.5" stroke="#8090a4" stroke-dasharray="3 3" />
<line x1="317" y1="65.5" x2="320" y2="65.5" stroke="#fff" />
<line x1="2" y1="108.5" x2="317" y2="108.5" stroke="#8090a4" stroke-dasharray="3 3" />
<line x1="317" y1="108.5" x2="320" y2="108.5" stroke="#fff" />
<rect x="1" y="40" width="1" height="4" fill="#00ff00"/><rect x="1" y="40" width="3" height="4" fill="#00ff00"/><rect x="1" y="41" width="2" height="2" fill="#fff"/><rect x="9" y="23" width="1" height="22" fill="#00ff00"/><rect x="7.5" y="36.5" width="4" height="4" fill="#000" stroke="#00ff00" stroke-width="1"/><rect x="17" y="27" width="1" height="10" fill="#00ff00"/><rect x="15" y="31" width="5" height="1" fill="#00ff00"/><rect x="25" y="31" width="1" height="18" fill="#00ff00"/><rect x="23.5" y="36.5" width="4" height="4" fill="#fff" stroke="#00ff00" stroke-width="1"/><rect x="33" y="36" width="1" height="22" fill="#00ff00"/><rect x="31.5" y="44.5" width="4" height="9" fill="#fff" stroke="#00ff00" stroke-width="1"/><rect x="41" y="44" width="1" height="14" fill="#00ff00"/><rect x="39" y="48" width="5" height="1" fill="#00ff00"/><rect x="49" y="40" width="1" height="14" fill="#00ff00"/><rect x="47.5" y="44.5" width="4" height="9" fill="#fff" stroke="#00ff00" stroke-width="1"/><rect x="57" y="40" width="1" height="25" fill="#00ff00"/><rect x="55.5" y="48.5" width="4" height="13" fill="#fff" stroke="#00ff00" stroke-width="1"/><rect x="65" y="61" width="1" height="10" fill="#00ff00"/><rect x="63" y="65" width="5" height="1" fill="#00ff00"/><rect x="73" y="61" width="1" height="13" fill="#00ff00"/><rect x="71.5" y="70.5" width="4" height="4" fill="#fff" stroke="#00ff00" stroke-width="1"/><rect x="81" y="48" width="1" height="31" fill="#00ff00"/><rect x="79.5" y="53.5" width="4" height="25" fill="#000" stroke="#00ff00" stroke-width="1"/><rect x="89" y="31" width="1" height="27" fill="#00ff00"/><rect x="87.5" y="36.5" width="4" height="21" fill="#000" stroke="#00ff00" stroke-width="1"/><rect x="97" y="36" width="1" height="26" fill="#00ff00"/><rect x="95.5" y="40.5" width="4" height="12" fill="#fff" stroke="#00ff00" stroke-width="1"/><rect x="105" y="40" width="1" height="18" fill="#00ff00"/><rect x="103.5" y="48.5" width="4" height="9" fill="#000" stroke="#00ff00" stroke-width="1"/><rect x="113" y="40" width="1" height="18" fill="#00ff00"/><rect x="111.5" y="44.5" width="4" height="8" fill="#fff" stroke="#00ff00" stroke-width="1"/><rect x="121" y="57" width="1" height="9" fill="#00ff00"/><rect x="119.5" y="57.5" width="4" height="4" fill="#fff" stroke="#00ff00" stroke-width="1"/><rect x="129" y="60" width="1" height="6" fill="#00ff00"/><rect x="127.5" y="62.5" width="4" height="3" fill="#000" stroke="#00ff00" stroke-width="1"/><rect x="137" y="57" width="1" height="13" fill="#00ff00"/><rect x="135.5" y="57.5" width="4" height="12" fill="#fff" stroke="#00ff00" stroke-width="1"/><rect x="145" y="61" width="1" height="23" fill="#00ff00"/><rect x="143.5" y="74.5" width="4" height="3" fill="#fff" stroke="#00ff00" stroke-width="1"/><rect x="153" y="74" width="1" height="10" fill="#00ff00"/><rect x="151.5" y="78.5" width="4" height="5" fill="#000" stroke="#00ff00" stroke-width="1"/><rect x="161" y="74" width="1" height="14" fill="#00ff00"/><rect x="159.5" y="74.5" width="4" height="9" fill="#fff" stroke="#00ff00" stroke-width="1"/><rect x="169" y="70" width="1" height="18" fill="#00ff00"/><rect x="167.5" y="70.5" width="4" height="7" fill="#000" stroke="#00ff00" stroke-width="1"/><rect x="177" y="57" width="1" height="21" fill="#00ff00"/><rect x="175.5" y="74.5" width="4" height="3" fill="#fff" stroke="#00ff00" stroke-width="1"/><rect x="185" y="62" width="1" height="17" fill="#00ff00"/><rect x="183.5" y="62.5" width="4" height="12" fill="#000" stroke="#00ff00" stroke-width="1"/><rect x="193" y="57" width="1" height="9" fill="#00ff00"/><rect x="191.5" y="57.5" width="4" height="8" fill="#000" stroke="#00ff00" stroke-width="1"/><rect x="201" y="48" width="1" height="23" fill="#00ff00"/><rect x="199.5" y="48.5" width="4" height="5" fill="#000" stroke="#00ff00" stroke-width="1"/><rect x="209" y="53" width="1" height="9" fill="#00ff00"/><rect x="207.5" y="53.5" width="4" height="4" fill="#fff" stroke="#00ff00" stroke-width="1"/><rect x="217" y="36" width="1" height="22" fill="#00ff00"/><rect x="215.5" y="53.5" width="4" height="4" fill="#fff" stroke="#00ff00" stroke-width="1"/><rect x="225" y="53" width="1" height="9" fill="#00ff00"/><rect x="223.5" y="53.5" width="4" height="8" fill="#fff" stroke="#00ff00" stroke-width="1"/><rect x="233" y="40" width="1" height="22" fill="#00ff00"/><rect x="231.5" y="40.5" width="4" height="17" fill="#000" stroke="#00ff00" stroke-width="1"/><rect x="241" y="27" width="1" height="18" fill="#00ff00"/><rect x="239.5" y="36.5" width="4" height="4" fill="#fff" stroke="#00ff00" stroke-width="1"/><rect x="249" y="36" width="1" height="18" fill="#00ff00"/><rect x="247.5" y="44.5" width="4" height="4" fill="#fff" stroke="#00ff00" stroke-width="1"/><rect x="257" y="42" width="1" height="7" fill="#00ff00"/><rect x="255" y="44" width="5" height="1" fill="#00ff00"/><rect x="265" y="40" width="1" height="9" fill="#00ff00"/><rect x="263.5" y="44.5" width="4" height="4" fill="#000" stroke="#00ff00" stroke-width="1"/><rect x="273" y="48" width="1" height="14" fill="#00ff00"/><rect x="271.5" y="48.5" width="4" height="9" fill="#fff" stroke="#00ff00" stroke-width="1"/><rect x="281" y="53" width="1" height="13" fill="#00ff00"/><rect x="279.5" y="57.5" width="4" height="4" fill="#000" stroke="#00ff00" stroke-width="1"/><rect x="289" y="36" width="1" height="22" fill="#00ff00"/><rect x="287.5" y="40.5" width="4" height="13" fill="#000" stroke="#00ff00" stroke-width="1"/><rect x="297" y="40" width="1" height="26" fill="#00ff00"/><rect x="295.5" y="44.5" width="4" height="21" fill="#fff" stroke="#00ff00" stroke-width="1"/>
<rect x="0.5" y="0.5" width="317" height="130" fill="none" stroke="#fff" stroke-width="1"/>
<line x1="1.5" y1="130" x2="1.5" y2="133" stroke="#fff" />
<line x1="65.5" y1="130" x2="65.5" y2="133" stroke="#fff" />
<line x1="129.5" y1="130" x2="129.5" y2="133" stroke="#fff" />
<line x1="193.5" y1="130" x2="193.5" y2="133" stroke="#fff" />
<line x1="257.5" y1="130" x2="257.5" y2="133" stroke="#fff" />
</svg>
<div class="t" style="left:558.5px;top:156.5px;font-size:9.3px;line-height:12px;color:#fff;">1.2825</div>
<div class="t" style="left:558.5px;top:198.5px;font-size:9.3px;line-height:12px;color:#fff;">1.2815</div>
<div class="t" style="left:558.5px;top:241.5px;font-size:9.3px;line-height:12px;color:#fff;">1.2805</div>
<div class="t" style="left:236px;top:274px;font-size:9.3px;line-height:12px;color:#fff;">29 Mar 2013</div>
<div class="t" style="left:300px;top:274px;font-size:9.3px;line-height:12px;color:#fff;">29 Mar 16:30</div>
<div class="t" style="left:364px;top:274px;font-size:9.3px;line-height:12px;color:#fff;">29 Mar 18:30</div>
<div class="t" style="left:428px;top:274px;font-size:9.3px;line-height:12px;color:#fff;">29 Mar 20:30</div>
<div class="t" style="left:492px;top:274px;font-size:9.3px;line-height:12px;color:#fff;">29 Mar 22:30</div>
<div class="t" style="left:240px;top:142px;font-size:9.3px;line-height:12px;color:#fff;background:#000;padding:0 1px;">EURUSD,M15&nbsp; 1.2820 1.2821 1.2815 1.2815</div>
<div style="left:555px;top:199px;width:36px;height:12px;background:#fff;"></div>
<div class="t" style="left:558.5px;top:199px;font-size:9.3px;line-height:12px;color:#000;">1.2815</div>
<div style="left:603px;top:106px;width:379px;height:192px;background:linear-gradient(#bccbdb 0px,#c7d5e4 14px,#d3e0ee 29px,#d6e3f1 100%);border:1px solid #3a4656;box-shadow:inset 0 0 0 1px #eef3f9;border-radius:6px 6px 0 0;"></div>
<svg style="left:614px;top:117px" width="16" height="15" viewBox="0 0 16 15">
<rect x="0.5" y="0.5" width="11" height="8" fill="#fff" stroke="#3b80f0"/>
<path d="M2 3.5 l1.5-1.5 1.5 1.5 h1 l1.5-1.5 1.5 2.5" stroke="#3b80f0" fill="none" stroke-width="1.1"/>
<rect x="3.5" y="5.5" width="11" height="8" fill="#fff" stroke="#3b80f0"/>
<path d="M5 8 l1.5 3 1.5-3 1.5 3 1.5-3 1.5 3" stroke="#3b80f0" fill="none" stroke-width="1.1"/></svg>
<div class="t" style="left:633px;top:118px;font-size:12px;line-height:14px;color:#222;transform:scaleX(0.9134);transform-origin:0 0;">USDJPY,M15</div>
<div style="left:875px;top:116px;width:30px;height:17px;background:linear-gradient(#e2eaf4 0%,#d7e2ef 48%,#c9d8ea 52%,#d2dfee 100%);border:1px solid #8797b0;border-radius:3px;"></div>
<div style="left:885px;top:124px;width:11px;height:5px;background:#fff;border:1px solid #3e4450;border-radius:1px;"></div>
<div style="left:909px;top:116px;width:30px;height:17px;background:linear-gradient(#e2eaf4 0%,#d7e2ef 48%,#c9d8ea 52%,#d2dfee 100%);border:1px solid #8797b0;border-radius:3px;"></div>
<div style="left:919px;top:120px;width:11px;height:9px;background:#fff;border:1px solid #3e4450;border-radius:1px;"></div>
<div style="left:922px;top:123px;width:5px;height:3px;background:#a9bfd8;border:1px solid #3e4450;"></div>
<div style="left:941px;top:116px;width:31px;height:17px;background:linear-gradient(#e2eaf4 0%,#d7e2ef 48%,#c9d8ea 52%,#d2dfee 100%);border:1px solid #8797b0;border-radius:3px;"></div>
<svg style="left:951px;top:120px" width="12" height="10" viewBox="0 0 12 10">
<path d="M2.8 2.2 L9.2 7.8 M9.2 2.2 L2.8 7.8" stroke="#4a505c" stroke-width="4" stroke-linecap="square"/>
<path d="M2.8 2.2 L9.2 7.8 M9.2 2.2 L2.8 7.8" stroke="#fff" stroke-width="2.2" stroke-linecap="square"/></svg>
<div style="left:611px;top:136px;width:363px;height:154px;border-top:1px solid #a0a0a0;border-left:1px solid #a0a0a0;border-right:1px solid #fff;border-bottom:1px solid #fff;"></div>
<div style="left:612px;top:137px;width:361px;height:152px;background:#fff;border-top:1px solid #696969;border-left:1px solid #696969;border-right:1px solid #e3e3e3;border-bottom:1px solid #e3e3e3;"></div>
<svg style="left:615px;top:140px" width="377" height="150">
<rect x="1" y="40" width="317" height="1" fill="#c0c0c0"/>
<line x1="33.5" y1="0" x2="33.5" y2="130" stroke="#c4c4c4" stroke-dasharray="3 3" />
<line x1="65.5" y1="0" x2="65.5" y2="130" stroke="#c4c4c4" stroke-dasharray="3 3" />
<line x1="97.5" y1="0" x2="97.5" y2="130" stroke="#c4c4c4" stroke-dasharray="3 3" />
<line x1="129.5" y1="0" x2="129.5" y2="130" stroke="#c4c4c4" stroke-dasharray="3 3" />
<line x1="161.5" y1="0" x2="161.5" y2="130" stroke="#c4c4c4" stroke-dasharray="3 3" />
<line x1="193.5" y1="0" x2="193.5" y2="130" stroke="#c4c4c4" stroke-dasharray="3 3" />
<line x1="225.5" y1="0" x2="225.5" y2="130" stroke="#c4c4c4" stroke-dasharray="3 3" />
<line x1="257.5" y1="0" x2="257.5" y2="130" stroke="#c4c4c4" stroke-dasharray="3 3" />
<line x1="289.5" y1="0" x2="289.5" y2="130" stroke="#c4c4c4" stroke-dasharray="3 3" />
<line x1="2" y1="23.5" x2="317" y2="23.5" stroke="#c4c4c4" stroke-dasharray="3 3" />
<line x1="317" y1="23.5" x2="320" y2="23.5" stroke="#000" />
<line x1="2" y1="66.5" x2="317" y2="66.5" stroke="#c4c4c4" stroke-dasharray="3 3" />
<line x1="317" y1="66.5" x2="320" y2="66.5" stroke="#000" />
<line x1="2" y1="108.5" x2="317" y2="108.5" stroke="#c4c4c4" stroke-dasharray="3 3" />
<line x1="317" y1="108.5" x2="320" y2="108.5" stroke="#000" />
<rect x="1" y="121" width="1" height="9" fill="#008000"/><rect x="9" y="122" width="1" height="8" fill="#008000"/><rect x="17" y="124" width="1" height="6" fill="#008000"/><rect x="25" y="123" width="1" height="7" fill="#008000"/><rect x="33" y="120" width="1" height="10" fill="#008000"/><rect x="41" y="127" width="1" height="3" fill="#008000"/><rect x="49" y="122" width="1" height="8" fill="#008000"/><rect x="57" y="120" width="1" height="10" fill="#008000"/><rect x="65" y="118" width="1" height="12" fill="#008000"/><rect x="73" y="119" width="1" height="11" fill="#008000"/><rect x="81" y="118" width="1" height="12" fill="#008000"/><rect x="89" y="125" width="1" height="5" fill="#008000"/><rect x="97" y="125" width="1" height="5" fill="#008000"/><rect x="105" y="120" width="1" height="10" fill="#008000"/><rect x="113" y="120" width="1" height="10" fill="#008000"/><rect x="121" y="121" width="1" height="9" fill="#008000"/><rect x="129" y="121" width="1" height="9" fill="#008000"/><rect x="137" y="123" width="1" height="7" fill="#008000"/><rect x="145" y="122" width="1" height="8" fill="#008000"/><rect x="153" y="119" width="1" height="11" fill="#008000"/><rect x="161" y="122" width="1" height="8" fill="#008000"/><rect x="169" y="124" width="1" height="6" fill="#008000"/><rect x="177" y="114" width="1" height="16" fill="#008000"/><rect x="185" y="125" width="1" height="5" fill="#008000"/><rect x="193" y="118" width="1" height="12" fill="#008000"/><rect x="201" y="121" width="1" height="9" fill="#008000"/><rect x="209" y="119" width="1" height="11" fill="#008000"/><rect x="217" y="123" width="1" height="7" fill="#008000"/><rect x="225" y="125" width="1" height="5" fill="#008000"/><rect x="233" y="127" width="1" height="3" fill="#008000"/><rect x="241" y="124" width="1" height="6" fill="#008000"/><rect x="249" y="121" width="1" height="9" fill="#008000"/><rect x="257" y="125" width="1" height="5" fill="#008000"/><rect x="265" y="122" width="1" height="8" fill="#008000"/><rect x="273" y="124" width="1" height="6" fill="#008000"/><rect x="281" y="123" width="1" height="7" fill="#008000"/><rect x="289" y="122" width="1" height="8" fill="#008000"/><rect x="297" y="118" width="1" height="12" fill="#008000"/><rect x="1" y="100" width="1" height="4" fill="#000"/><rect x="1" y="100" width="3" height="4" fill="#000"/><rect x="1" y="101" width="2" height="2" fill="#fff"/><rect x="9" y="87" width="1" height="18" fill="#000"/><rect x="7.5" y="91.5" width="4" height="13" fill="#fff" stroke="#000" stroke-width="1"/><rect x="17" y="87" width="1" height="9" fill="#000"/><rect x="15.5" y="87.5" width="4" height="4" fill="#000" stroke="#000" stroke-width="1"/><rect x="25" y="91" width="1" height="10" fill="#000"/><rect x="23" y="95" width="5" height="1" fill="#000"/><rect x="33" y="100" width="1" height="13" fill="#000"/><rect x="31.5" y="100.5" width="4" height="4" fill="#000" stroke="#000" stroke-width="1"/><rect x="41" y="100" width="1" height="9" fill="#000"/><rect x="39" y="100" width="5" height="1" fill="#000"/><rect x="49" y="91" width="1" height="14" fill="#000"/><rect x="47.5" y="95.5" width="4" height="9" fill="#fff" stroke="#000" stroke-width="1"/><rect x="57" y="78" width="1" height="23" fill="#000"/><rect x="55.5" y="78.5" width="4" height="22" fill="#fff" stroke="#000" stroke-width="1"/><rect x="65" y="78" width="1" height="18" fill="#000"/><rect x="63.5" y="83.5" width="4" height="8" fill="#000" stroke="#000" stroke-width="1"/><rect x="73" y="78" width="1" height="14" fill="#000"/><rect x="71" y="87" width="5" height="1" fill="#000"/><rect x="81" y="65" width="1" height="18" fill="#000"/><rect x="79.5" y="74.5" width="4" height="8" fill="#fff" stroke="#000" stroke-width="1"/><rect x="89" y="61" width="1" height="23" fill="#000"/><rect x="87.5" y="65.5" width="4" height="13" fill="#fff" stroke="#000" stroke-width="1"/><rect x="97" y="57" width="1" height="13" fill="#000"/><rect x="95.5" y="61.5" width="4" height="8" fill="#000" stroke="#000" stroke-width="1"/><rect x="105" y="61" width="1" height="18" fill="#000"/><rect x="103" y="65" width="5" height="1" fill="#000"/><rect x="113" y="61" width="1" height="13" fill="#000"/><rect x="111.5" y="65.5" width="4" height="4" fill="#fff" stroke="#000" stroke-width="1"/><rect x="121" y="61" width="1" height="18" fill="#000"/><rect x="119.5" y="61.5" width="4" height="12" fill="#000" stroke="#000" stroke-width="1"/><rect x="129" y="61" width="1" height="13" fill="#000"/><rect x="127.5" y="65.5" width="4" height="4" fill="#fff" stroke="#000" stroke-width="1"/><rect x="137" y="61" width="1" height="9" fill="#000"/><rect x="135.5" y="61.5" width="4" height="8" fill="#fff" stroke="#000" stroke-width="1"/><rect x="145" y="44" width="1" height="18" fill="#000"/><rect x="143.5" y="48.5" width="4" height="8" fill="#fff" stroke="#000" stroke-width="1"/><rect x="153" y="44" width="1" height="18" fill="#000"/><rect x="151.5" y="44.5" width="4" height="3" fill="#000" stroke="#000" stroke-width="1"/><rect x="161" y="44" width="1" height="13" fill="#000"/><rect x="159.5" y="48.5" width="4" height="4" fill="#fff" stroke="#000" stroke-width="1"/><rect x="169" y="44" width="1" height="13" fill="#000"/><rect x="167.5" y="44.5" width="4" height="3" fill="#000" stroke="#000" stroke-width="1"/><rect x="177" y="44" width="1" height="9" fill="#000"/><rect x="175" y="53" width="5" height="1" fill="#000"/><rect x="185" y="48" width="1" height="5" fill="#000"/><rect x="183" y="48" width="5" height="1" fill="#000"/><rect x="193" y="48" width="1" height="18" fill="#000"/><rect x="191.5" y="53.5" width="4" height="8" fill="#000" stroke="#000" stroke-width="1"/><rect x="201" y="44" width="1" height="21" fill="#000"/><rect x="199.5" y="44.5" width="4" height="20" fill="#fff" stroke="#000" stroke-width="1"/><rect x="209" y="40" width="1" height="13" fill="#000"/><rect x="207.5" y="44.5" width="4" height="3" fill="#fff" stroke="#000" stroke-width="1"/><rect x="217" y="31" width="1" height="17" fill="#000"/><rect x="215.5" y="37.5" width="4" height="10" fill="#fff" stroke="#000" stroke-width="1"/><rect x="225" y="36" width="1" height="9" fill="#000"/><rect x="223.5" y="40.5" width="4" height="4" fill="#000" stroke="#000" stroke-width="1"/><rect x="233" y="40" width="1" height="5" fill="#000"/><rect x="231" y="40" width="5" height="1" fill="#000"/><rect x="241" y="40" width="1" height="8" fill="#000"/><rect x="239" y="44" width="5" height="1" fill="#000"/><rect x="249" y="44" width="1" height="18" fill="#000"/><rect x="247.5" y="48.5" width="4" height="9" fill="#000" stroke="#000" stroke-width="1"/><rect x="257" y="53" width="1" height="5" fill="#000"/><rect x="255" y="53" width="5" height="1" fill="#000"/><rect x="265" y="53" width="1" height="9" fill="#000"/><rect x="263" y="58" width="5" height="1" fill="#000"/><rect x="273" y="53" width="1" height="9" fill="#000"/><rect x="271.5" y="58.5" width="4" height="3" fill="#fff" stroke="#000" stroke-width="1"/><rect x="281" y="58" width="1" height="7" fill="#000"/><rect x="279.5" y="58.5" width="4" height="3" fill="#fff" stroke="#000" stroke-width="1"/><rect x="289" y="40" width="1" height="22" fill="#000"/><rect x="287.5" y="44.5" width="4" height="17" fill="#fff" stroke="#000" stroke-width="1"/><rect x="297" y="23" width="1" height="39" fill="#000"/><rect x="295" y="40" width="5" height="1" fill="#000"/>
<rect x="0.5" y="0.5" width="317" height="130" fill="none" stroke="#000" stroke-width="1"/>
<line x1="1.5" y1="130" x2="1.5" y2="133" stroke="#000" />
<line x1="65.5" y1="130" x2="65.5" y2="133" stroke="#000" />
<line x1="129.5" y1="130" x2="129.5" y2="133" stroke="#000" />
<line x1="193.5" y1="130" x2="193.5" y2="133" stroke="#000" />
<line x1="257.5" y1="130" x2="257.5" y2="133" stroke="#000" />
</svg>
<div class="t" style="left:937.5px;top:156.5px;font-size:9.3px;line-height:12px;color:#000;">94.25</div>
<div class="t" style="left:937.5px;top:199.5px;font-size:9.3px;line-height:12px;color:#000;">94.15</div>
<div class="t" style="left:937.5px;top:241.5px;font-size:9.3px;line-height:12px;color:#000;">94.05</div>
<div class="t" style="left:615px;top:274px;font-size:9.3px;line-height:12px;color:#000;">29 Mar 2013</div>
<div class="t" style="left:679px;top:274px;font-size:9.3px;line-height:12px;color:#000;">29 Mar 16:30</div>
<div class="t" style="left:743px;top:274px;font-size:9.3px;line-height:12px;color:#000;">29 Mar 18:30</div>
<div class="t" style="left:807px;top:274px;font-size:9.3px;line-height:12px;color:#000;">29 Mar 20:30</div>
<div class="t" style="left:871px;top:274px;font-size:9.3px;line-height:12px;color:#000;">29 Mar 22:30</div>
<div class="t" style="left:619px;top:142px;font-size:9.3px;line-height:12px;color:#000;background:#fff;padding:0 1px;">USDJPY,M15&nbsp; 94.21 94.25 94.16 94.21</div>
<div style="left:934px;top:174px;width:31px;height:12px;background:#000;"></div>
<div class="t" style="left:937.5px;top:174px;font-size:9.3px;line-height:12px;color:#fff;">94.21</div>
<div style="left:224px;top:298px;width:379px;height:192px;background:linear-gradient(#bccbdb 0px,#c7d5e4 14px,#d3e0ee 29px,#d6e3f1 100%);border:1px solid #3a4656;box-shadow:inset 0 0 0 1px #eef3f9;border-radius:6px 6px 0 0;"></div>
<svg style="left:235px;top:309px" width="16" height="15" viewBox="0 0 16 15">
<rect x="0.5" y="0.5" width="11" height="8" fill="#fff" stroke="#3b80f0"/>
<path d="M2 3.5 l1.5-1.5 1.5 1.5 h1 l1.5-1.5 1.5 2.5" stroke="#3b80f0" fill="none" stroke-width="1.1"/>
<rect x="3.5" y="5.5" width="11" height="8" fill="#fff" stroke="#3b80f0"/>
<path d="M5 8 l1.5 3 1.5-3 1.5 3 1.5-3 1.5 3" stroke="#3b80f0" fill="none" stroke-width="1.1"/></svg>
<div class="t" style="left:254px;top:310px;font-size:12px;line-height:14px;color:#222;transform:scaleX(0.9666);transform-origin:0 0;">#AAPL,M15</div>
<div style="left:496px;top:308px;width:30px;height:17px;background:linear-gradient(#e2eaf4 0%,#d7e2ef 48%,#c9d8ea 52%,#d2dfee 100%);border:1px solid #8797b0;border-radius:3px;"></div>
<div style="left:506px;top:316px;width:11px;height:5px;background:#fff;border:1px solid #3e4450;border-radius:1px;"></div>
<div style="left:530px;top:308px;width:30px;height:17px;background:linear-gradient(#e2eaf4 0%,#d7e2ef 48%,#c9d8ea 52%,#d2dfee 100%);border:1px solid #8797b0;border-radius:3px;"></div>
<div style="left:540px;top:312px;width:11px;height:9px;background:#fff;border:1px solid #3e4450;border-radius:1px;"></div>
<div style="left:543px;top:315px;width:5px;height:3px;background:#a9bfd8;border:1px solid #3e4450;"></div>
<div style="left:562px;top:308px;width:31px;height:17px;background:linear-gradient(#e2eaf4 0%,#d7e2ef 48%,#c9d8ea 52%,#d2dfee 100%);border:1px solid #8797b0;border-radius:3px;"></div>
<svg style="left:572px;top:312px" width="12" height="10" viewBox="0 0 12 10">
<path d="M2.8 2.2 L9.2 7.8 M9.2 2.2 L2.8 7.8" stroke="#4a505c" stroke-width="4" stroke-linecap="square"/>
<path d="M2.8 2.2 L9.2 7.8 M9.2 2.2 L2.8 7.8" stroke="#fff" stroke-width="2.2" stroke-linecap="square"/></svg>
<div style="left:232px;top:328px;width:363px;height:154px;border-top:1px solid #a0a0a0;border-left:1px solid #a0a0a0;border-right:1px solid #fff;border-bottom:1px solid #fff;"></div>
<div style="left:233px;top:329px;width:361px;height:152px;background:#000;border-top:1px solid #696969;border-left:1px solid #696969;border-right:1px solid #e3e3e3;border-bottom:1px solid #e3e3e3;"></div>
<svg style="left:236px;top:332px" width="377" height="150">
<rect x="1" y="116" width="317" height="1" fill="#778899"/>
<line x1="33.5" y1="0" x2="33.5" y2="130" stroke="#8090a4" stroke-dasharray="3 3" />
<line x1="65.5" y1="0" x2="65.5" y2="130" stroke="#8090a4" stroke-dasharray="3 3" />
<line x1="97.5" y1="0" x2="97.5" y2="130" stroke="#8090a4" stroke-dasharray="3 3" />
<line x1="129.5" y1="0" x2="129.5" y2="130" stroke="#8090a4" stroke-dasharray="3 3" />
<line x1="161.5" y1="0" x2="161.5" y2="130" stroke="#8090a4" stroke-dasharray="3 3" />
<line x1="193.5" y1="0" x2="193.5" y2="130" stroke="#8090a4" stroke-dasharray="3 3" />
<line x1="225.5" y1="0" x2="225.5" y2="130" stroke="#8090a4" stroke-dasharray="3 3" />
<line x1="257.5" y1="0" x2="257.5" y2="130" stroke="#8090a4" stroke-dasharray="3 3" />
<line x1="289.5" y1="0" x2="289.5" y2="130" stroke="#8090a4" stroke-dasharray="3 3" />
<line x1="2" y1="28.5" x2="317" y2="28.5" stroke="#8090a4" stroke-dasharray="3 3" />
<line x1="317" y1="28.5" x2="320" y2="28.5" stroke="#fff" />
<line x1="2" y1="61.5" x2="317" y2="61.5" stroke="#8090a4" stroke-dasharray="3 3" />
<line x1="317" y1="61.5" x2="320" y2="61.5" stroke="#fff" />
<line x1="2" y1="94.5" x2="317" y2="94.5" stroke="#8090a4" stroke-dasharray="3 3" />
<line x1="317" y1="94.5" x2="320" y2="94.5" stroke="#fff" />
<line x1="2" y1="127.5" x2="317" y2="127.5" stroke="#8090a4" stroke-dasharray="3 3" />
<line x1="317" y1="127.5" x2="320" y2="127.5" stroke="#fff" />
<rect x="1" y="20" width="1" height="6" fill="#00ff00"/><rect x="1" y="20" width="3" height="6" fill="#00ff00"/><rect x="1" y="21" width="2" height="4" fill="#fff"/><rect x="9" y="23" width="1" height="8" fill="#00ff00"/><rect x="7.5" y="27.5" width="4" height="1" fill="#fff" stroke="#00ff00" stroke-width="1"/><rect x="17" y="23" width="1" height="11" fill="#00ff00"/><rect x="15.5" y="26.5" width="4" height="2" fill="#000" stroke="#00ff00" stroke-width="1"/><rect x="25" y="22" width="1" height="7" fill="#00ff00"/><rect x="23.5" y="24.5" width="4" height="3" fill="#000" stroke="#00ff00" stroke-width="1"/><rect x="33" y="20" width="1" height="6" fill="#00ff00"/><rect x="31.5" y="22.5" width="4" height="1" fill="#fff" stroke="#00ff00" stroke-width="1"/><rect x="41" y="14" width="1" height="10" fill="#00ff00"/><rect x="39.5" y="14.5" width="4" height="7" fill="#000" stroke="#00ff00" stroke-width="1"/><rect x="49" y="14" width="1" height="4" fill="#00ff00"/><rect x="47" y="14" width="5" height="1" fill="#00ff00"/><rect x="57" y="14" width="1" height="5" fill="#00ff00"/><rect x="55.5" y="14.5" width="4" height="1" fill="#fff" stroke="#00ff00" stroke-width="1"/><rect x="65" y="14" width="1" height="7" fill="#00ff00"/><rect x="63" y="15" width="5" height="1" fill="#00ff00"/><rect x="73" y="14" width="1" height="12" fill="#00ff00"/><rect x="71.5" y="15.5" width="4" height="4" fill="#fff" stroke="#00ff00" stroke-width="1"/><rect x="81" y="18" width="1" height="20" fill="#00ff00"/><rect x="79.5" y="21.5" width="4" height="3" fill="#fff" stroke="#00ff00" stroke-width="1"/><rect x="89" y="19" width="1" height="9" fill="#00ff00"/><rect x="87" y="25" width="5" height="1" fill="#00ff00"/><rect x="97" y="38" width="1" height="26" fill="#00ff00"/><rect x="95.5" y="43.5" width="4" height="6" fill="#000" stroke="#00ff00" stroke-width="1"/><rect x="105" y="27" width="1" height="23" fill="#00ff00"/><rect x="103" y="45" width="5" height="1" fill="#00ff00"/><rect x="113" y="39" width="1" height="19" fill="#00ff00"/><rect x="111.5" y="46.5" width="4" height="5" fill="#fff" stroke="#00ff00" stroke-width="1"/><rect x="121" y="48" width="1" height="13" fill="#00ff00"/><rect x="119.5" y="51.5" width="4" height="8" fill="#fff" stroke="#00ff00" stroke-width="1"/><rect x="129" y="52" width="1" height="8" fill="#00ff00"/><rect x="127.5" y="54.5" width="4" height="5" fill="#000" stroke="#00ff00" stroke-width="1"/><rect x="137" y="53" width="1" height="15" fill="#00ff00"/><rect x="135.5" y="54.5" width="4" height="6" fill="#fff" stroke="#00ff00" stroke-width="1"/><rect x="145" y="58" width="1" height="10" fill="#00ff00"/><rect x="143.5" y="61.5" width="4" height="3" fill="#fff" stroke="#00ff00" stroke-width="1"/><rect x="153" y="64" width="1" height="18" fill="#00ff00"/><rect x="151.5" y="64.5" width="4" height="15" fill="#fff" stroke="#00ff00" stroke-width="1"/><rect x="161" y="78" width="1" height="29" fill="#00ff00"/><rect x="159.5" y="79.5" width="4" height="20" fill="#fff" stroke="#00ff00" stroke-width="1"/><rect x="169" y="91" width="1" height="15" fill="#00ff00"/><rect x="167" y="99" width="5" height="1" fill="#00ff00"/><rect x="177" y="92" width="1" height="13" fill="#00ff00"/><rect x="175.5" y="99.5" width="4" height="1" fill="#fff" stroke="#00ff00" stroke-width="1"/><rect x="185" y="94" width="1" height="13" fill="#00ff00"/><rect x="183" y="101" width="5" height="1" fill="#00ff00"/><rect x="193" y="93" width="1" height="8" fill="#00ff00"/><rect x="191.5" y="93.5" width="4" height="7" fill="#000" stroke="#00ff00" stroke-width="1"/><rect x="201" y="92" width="1" height="14" fill="#00ff00"/><rect x="199.5" y="94.5" width="4" height="6" fill="#fff" stroke="#00ff00" stroke-width="1"/><rect x="209" y="101" width="1" height="7" fill="#00ff00"/><rect x="207.5" y="101.5" width="4" height="2" fill="#fff" stroke="#00ff00" stroke-width="1"/><rect x="217" y="99" width="1" height="8" fill="#00ff00"/><rect x="215.5" y="100.5" width="4" height="3" fill="#000" stroke="#00ff00" stroke-width="1"/><rect x="225" y="94" width="1" height="9" fill="#00ff00"/><rect x="223" y="100" width="5" height="1" fill="#00ff00"/><rect x="233" y="99" width="1" height="8" fill="#00ff00"/><rect x="231.5" y="100.5" width="4" height="2" fill="#fff" stroke="#00ff00" stroke-width="1"/><rect x="241" y="102" width="1" height="14" fill="#00ff00"/><rect x="239.5" y="103.5" width="4" height="7" fill="#fff" stroke="#00ff00" stroke-width="1"/><rect x="249" y="111" width="1" height="8" fill="#00ff00"/><rect x="247.5" y="111.5" width="4" height="7" fill="#fff" stroke="#00ff00" stroke-width="1"/><rect x="257" y="116" width="1" height="11" fill="#00ff00"/><rect x="255.5" y="117.5" width="4" height="1" fill="#000" stroke="#00ff00" stroke-width="1"/><rect x="265" y="112" width="1" height="13" fill="#00ff00"/><rect x="263.5" y="112.5" width="4" height="4" fill="#000" stroke="#00ff00" stroke-width="1"/><rect x="273" y="110" width="1" height="9" fill="#00ff00"/><rect x="271.5" y="112.5" width="4" height="3" fill="#fff" stroke="#00ff00" stroke-width="1"/><rect x="281" y="114" width="1" height="7" fill="#00ff00"/><rect x="279" y="116" width="5" height="1" fill="#00ff00"/><rect x="289" y="116" width="1" height="8" fill="#00ff00"/><rect x="287.5" y="117.5" width="4" height="1" fill="#fff" stroke="#00ff00" stroke-width="1"/><rect x="297" y="108" width="1" height="17" fill="#00ff00"/><rect x="295.5" y="116.5" width="4" height="2" fill="#000" stroke="#00ff00" stroke-width="1"/>
<rect x="0.5" y="0.5" width="317" height="130" fill="none" stroke="#fff" stroke-width="1"/>
<line x1="1.5" y1="130" x2="1.5" y2="133" stroke="#fff" />
<line x1="65.5" y1="130" x2="65.5" y2="133" stroke="#fff" />
<line x1="129.5" y1="130" x2="129.5" y2="133" stroke="#fff" />
<line x1="193.5" y1="130" x2="193.5" y2="133" stroke="#fff" />
<line x1="257.5" y1="130" x2="257.5" y2="133" stroke="#fff" />
</svg>
<div class="t" style="left:558.5px;top:353.5px;font-size:9.3px;line-height:12px;color:#fff;">451.50</div>
<div class="t" style="left:558.5px;top:386.5px;font-size:9.3px;line-height:12px;color:#fff;">448.10</div>
<div class="t" style="left:558.5px;top:419.5px;font-size:9.3px;line-height:12px;color:#fff;">444.70</div>
<div class="t" style="left:558.5px;top:452.5px;font-size:9.3px;line-height:12px;color:#fff;">441.30</div>
<div class="t" style="left:236px;top:466px;font-size:9.3px;line-height:12px;color:#fff;">27 Mar 2013</div>
<div class="t" style="left:300px;top:466px;font-size:9.3px;line-height:12px;color:#fff;">27 Mar 22:00</div>
<div class="t" style="left:364px;top:466px;font-size:9.3px;line-height:12px;color:#fff;">28 Mar 17:30</div>
<div class="t" style="left:428px;top:466px;font-size:9.3px;line-height:12px;color:#fff;">28 Mar 19:30</div>
<div class="t" style="left:492px;top:466px;font-size:9.3px;line-height:12px;color:#fff;">28 Mar 21:30</div>
<div class="t" style="left:240px;top:334px;font-size:9.3px;line-height:12px;color:#fff;background:#000;padding:0 1px;">#AAPL,M15&nbsp; 442.09 443.19 441.52 442.39</div>
<div style="left:555px;top:442px;width:36px;height:12px;background:#fff;"></div>
<div class="t" style="left:558.5px;top:442px;font-size:9.3px;line-height:12px;color:#000;">442.39</div>
<div style="left:603px;top:298px;width:379px;height:192px;background:linear-gradient(#bccbdb 0px,#c7d5e4 14px,#d3e0ee 29px,#d6e3f1 100%);border:1px solid #3a4656;box-shadow:inset 0 0 0 1px #eef3f9;border-radius:6px 6px 0 0;"></div>
<svg style="left:614px;top:309px" width="16" height="15" viewBox="0 0 16 15">
<rect x="0.5" y="0.5" width="11" height="8" fill="#fff" stroke="#3b80f0"/>
<path d="M2 3.5 l1.5-1.5 1.5 1.5 h1 l1.5-1.5 1.5 2.5" stroke="#3b80f0" fill="none" stroke-width="1.1"/>
<rect x="3.5" y="5.5" width="11" height="8" fill="#fff" stroke="#3b80f0"/>
<path d="M5 8 l1.5 3 1.5-3 1.5 3 1.5-3 1.5 3" stroke="#3b80f0" fill="none" stroke-width="1.1"/></svg>
<div class="t" style="left:633px;top:310px;font-size:12px;line-height:14px;color:#222;transform:scaleX(0.9075);transform-origin:0 0;">GBPUSD,M15</div>
<div style="left:875px;top:308px;width:30px;height:17px;background:linear-gradient(#e2eaf4 0%,#d7e2ef 48%,#c9d8ea 52%,#d2dfee 100%);border:1px solid #8797b0;border-radius:3px;"></div>
<div style="left:885px;top:316px;width:11px;height:5px;background:#fff;border:1px solid #3e4450;border-radius:1px;"></div>
<div style="left:909px;top:308px;width:30px;height:17px;background:linear-gradient(#e2eaf4 0%,#d7e2ef 48%,#c9d8ea 52%,#d2dfee 100%);border:1px solid #8797b0;border-radius:3px;"></div>
<div style="left:919px;top:312px;width:11px;height:9px;background:#fff;border:1px solid #3e4450;border-radius:1px;"></div>
<div style="left:922px;top:315px;width:5px;height:3px;background:#a9bfd8;border:1px solid #3e4450;"></div>
<div style="left:941px;top:308px;width:31px;height:17px;background:linear-gradient(#e2eaf4 0%,#d7e2ef 48%,#c9d8ea 52%,#d2dfee 100%);border:1px solid #8797b0;border-radius:3px;"></div>
<svg style="left:951px;top:312px" width="12" height="10" viewBox="0 0 12 10">
<path d="M2.8 2.2 L9.2 7.8 M9.2 2.2 L2.8 7.8" stroke="#4a505c" stroke-width="4" stroke-linecap="square"/>
<path d="M2.8 2.2 L9.2 7.8 M9.2 2.2 L2.8 7.8" stroke="#fff" stroke-width="2.2" stroke-linecap="square"/></svg>
<div style="left:611px;top:328px;width:363px;height:154px;border-top:1px solid #a0a0a0;border-left:1px solid #a0a0a0;border-right:1px solid #fff;border-bottom:1px solid #fff;"></div>
<div style="left:612px;top:329px;width:361px;height:152px;background:#000;border-top:1px solid #696969;border-left:1px solid #696969;border-right:1px solid #e3e3e3;border-bottom:1px solid #e3e3e3;"></div>
<svg style="left:615px;top:332px" width="377" height="150">
<rect x="1" y="30" width="317" height="1" fill="#778899"/>
<line x1="33.5" y1="0" x2="33.5" y2="130" stroke="#8090a4" stroke-dasharray="3 3" />
<line x1="65.5" y1="0" x2="65.5" y2="130" stroke="#8090a4" stroke-dasharray="3 3" />
<line x1="97.5" y1="0" x2="97.5" y2="130" stroke="#8090a4" stroke-dasharray="3 3" />
<line x1="129.5" y1="0" x2="129.5" y2="130" stroke="#8090a4" stroke-dasharray="3 3" />
<line x1="161.5" y1="0" x2="161.5" y2="130" stroke="#8090a4" stroke-dasharray="3 3" />
<line x1="193.5" y1="0" x2="193.5" y2="130" stroke="#8090a4" stroke-dasharray="3 3" />
<line x1="225.5" y1="0" x2="225.5" y2="130" stroke="#8090a4" stroke-dasharray="3 3" />
<line x1="257.5" y1="0" x2="257.5" y2="130" stroke="#8090a4" stroke-dasharray="3 3" />
<line x1="289.5" y1="0" x2="289.5" y2="130" stroke="#8090a4" stroke-dasharray="3 3" />
<line x1="2" y1="18.5" x2="317" y2="18.5" stroke="#8090a4" stroke-dasharray="3 3" />
<line x1="317" y1="18.5" x2="320" y2="18.5" stroke="#fff" />
<line x1="2" y1="66.5" x2="317" y2="66.5" stroke="#8090a4" stroke-dasharray="3 3" />
<line x1="317" y1="66.5" x2="320" y2="66.5" stroke="#fff" />
<line x1="2" y1="114.5" x2="317" y2="114.5" stroke="#8090a4" stroke-dasharray="3 3" />
<line x1="317" y1="114.5" x2="320" y2="114.5" stroke="#fff" />
<rect x="1" y="27" width="1" height="6" fill="#00ff00"/><rect x="1" y="27" width="3" height="6" fill="#00ff00"/><rect x="1" y="28" width="2" height="4" fill="#fff"/><rect x="9" y="27" width="1" height="33" fill="#00ff00"/><rect x="7.5" y="27.5" width="4" height="21" fill="#fff" stroke="#00ff00" stroke-width="1"/><rect x="17" y="40" width="1" height="10" fill="#00ff00"/><rect x="15.5" y="43.5" width="4" height="2" fill="#000" stroke="#00ff00" stroke-width="1"/><rect x="25" y="24" width="1" height="23" fill="#00ff00"/><rect x="23.5" y="40.5" width="4" height="3" fill="#fff" stroke="#00ff00" stroke-width="1"/><rect x="33" y="46" width="1" height="11" fill="#00ff00"/><rect x="31.5" y="46.5" width="4" height="6" fill="#fff" stroke="#00ff00" stroke-width="1"/><rect x="41" y="49" width="1" height="14" fill="#00ff00"/><rect x="39.5" y="56.5" width="4" height="3" fill="#fff" stroke="#00ff00" stroke-width="1"/><rect x="49" y="17" width="1" height="46" fill="#00ff00"/><rect x="47.5" y="21.5" width="4" height="40" fill="#000" stroke="#00ff00" stroke-width="1"/><rect x="57" y="17" width="1" height="33" fill="#00ff00"/><rect x="55.5" y="17.5" width="4" height="29" fill="#fff" stroke="#00ff00" stroke-width="1"/><rect x="65" y="43" width="1" height="14" fill="#00ff00"/><rect x="63" y="50" width="5" height="1" fill="#00ff00"/><rect x="73" y="49" width="1" height="18" fill="#00ff00"/><rect x="71.5" y="53.5" width="4" height="3" fill="#fff" stroke="#00ff00" stroke-width="1"/><rect x="81" y="30" width="1" height="30" fill="#00ff00"/><rect x="79.5" y="41.5" width="4" height="18" fill="#000" stroke="#00ff00" stroke-width="1"/><rect x="89" y="37" width="1" height="9" fill="#00ff00"/><rect x="87.5" y="37.5" width="4" height="8" fill="#fff" stroke="#00ff00" stroke-width="1"/><rect x="97" y="24" width="1" height="22" fill="#00ff00"/><rect x="95.5" y="37.5" width="4" height="5" fill="#000" stroke="#00ff00" stroke-width="1"/><rect x="105" y="37" width="1" height="23" fill="#00ff00"/><rect x="103.5" y="41.5" width="4" height="7" fill="#fff" stroke="#00ff00" stroke-width="1"/><rect x="113" y="40" width="1" height="10" fill="#00ff00"/><rect x="111.5" y="40.5" width="4" height="5" fill="#000" stroke="#00ff00" stroke-width="1"/><rect x="121" y="40" width="1" height="6" fill="#00ff00"/><rect x="119.5" y="43.5" width="4" height="2" fill="#fff" stroke="#00ff00" stroke-width="1"/><rect x="129" y="43" width="1" height="13" fill="#00ff00"/><rect x="127" y="50" width="5" height="1" fill="#00ff00"/><rect x="137" y="49" width="1" height="17" fill="#00ff00"/><rect x="135.5" y="53.5" width="4" height="12" fill="#fff" stroke="#00ff00" stroke-width="1"/><rect x="145" y="66" width="1" height="32" fill="#00ff00"/><rect x="143.5" y="69.5" width="4" height="21" fill="#fff" stroke="#00ff00" stroke-width="1"/><rect x="153" y="82" width="1" height="12" fill="#00ff00"/><rect x="151.5" y="82.5" width="4" height="11" fill="#000" stroke="#00ff00" stroke-width="1"/><rect x="161" y="62" width="1" height="24" fill="#00ff00"/><rect x="159.5" y="75.5" width="4" height="9" fill="#000" stroke="#00ff00" stroke-width="1"/><rect x="169" y="62" width="1" height="27" fill="#00ff00"/><rect x="167.5" y="66.5" width="4" height="12" fill="#000" stroke="#00ff00" stroke-width="1"/><rect x="177" y="30" width="1" height="32" fill="#00ff00"/><rect x="175.5" y="41.5" width="4" height="20" fill="#000" stroke="#00ff00" stroke-width="1"/><rect x="185" y="41" width="1" height="9" fill="#00ff00"/><rect x="183" y="44" width="5" height="1" fill="#00ff00"/><rect x="193" y="41" width="1" height="9" fill="#00ff00"/><rect x="191.5" y="43.5" width="4" height="2" fill="#000" stroke="#00ff00" stroke-width="1"/><rect x="201" y="33" width="1" height="20" fill="#00ff00"/><rect x="199.5" y="46.5" width="4" height="6" fill="#fff" stroke="#00ff00" stroke-width="1"/><rect x="209" y="46" width="1" height="17" fill="#00ff00"/><rect x="207.5" y="50.5" width="4" height="6" fill="#000" stroke="#00ff00" stroke-width="1"/><rect x="217" y="46" width="1" height="14" fill="#00ff00"/><rect x="215" y="53" width="5" height="1" fill="#00ff00"/><rect x="225" y="53" width="1" height="10" fill="#00ff00"/><rect x="223.5" y="56.5" width="4" height="3" fill="#fff" stroke="#00ff00" stroke-width="1"/><rect x="233" y="50" width="1" height="13" fill="#00ff00"/><rect x="231.5" y="53.5" width="4" height="8" fill="#000" stroke="#00ff00" stroke-width="1"/><rect x="241" y="50" width="1" height="10" fill="#00ff00"/><rect x="239.5" y="50.5" width="4" height="2" fill="#fff" stroke="#00ff00" stroke-width="1"/><rect x="249" y="50" width="1" height="13" fill="#00ff00"/><rect x="247.5" y="56.5" width="4" height="3" fill="#fff" stroke="#00ff00" stroke-width="1"/><rect x="257" y="56" width="1" height="4" fill="#00ff00"/><rect x="255.5" y="56.5" width="4" height="3" fill="#fff" stroke="#00ff00" stroke-width="1"/><rect x="265" y="50" width="1" height="13" fill="#00ff00"/><rect x="263.5" y="53.5" width="4" height="3" fill="#000" stroke="#00ff00" stroke-width="1"/><rect x="273" y="37" width="1" height="20" fill="#00ff00"/><rect x="271.5" y="40.5" width="4" height="16" fill="#000" stroke="#00ff00" stroke-width="1"/><rect x="281" y="24" width="1" height="26" fill="#00ff00"/><rect x="279.5" y="30.5" width="4" height="12" fill="#000" stroke="#00ff00" stroke-width="1"/><rect x="289" y="17" width="1" height="16" fill="#00ff00"/><rect x="287.5" y="21.5" width="4" height="5" fill="#000" stroke="#00ff00" stroke-width="1"/><rect x="297" y="17" width="1" height="53" fill="#00ff00"/><rect x="295.5" y="24.5" width="4" height="5" fill="#fff" stroke="#00ff00" stroke-width="1"/>
<rect x="0.5" y="0.5" width="317" height="130" fill="none" stroke="#fff" stroke-width="1"/>
<line x1="1.5" y1="130" x2="1.5" y2="133" stroke="#fff" />
<line x1="65.5" y1="130" x2="65.5" y2="133" stroke="#fff" />
<line x1="129.5" y1="130" x2="129.5" y2="133" stroke="#fff" />
<line x1="193.5" y1="130" x2="193.5" y2="133" stroke="#fff" />
<line x1="257.5" y1="130" x2="257.5" y2="133" stroke="#fff" />
</svg>
<div class="t" style="left:937.5px;top:343.5px;font-size:9.3px;line-height:12px;color:#fff;">1.5205</div>
<div class="t" style="left:937.5px;top:391.5px;font-size:9.3px;line-height:12px;color:#fff;">1.5190</div>
<div class="t" style="left:937.5px;top:439.5px;font-size:9.3px;line-height:12px;color:#fff;">1.5175</div>
<div class="t" style="left:615px;top:466px;font-size:9.3px;line-height:12px;color:#fff;">29 Mar 2013</div>
<div class="t" style="left:679px;top:466px;font-size:9.3px;line-height:12px;color:#fff;">29 Mar 16:30</div>
<div class="t" style="left:743px;top:466px;font-size:9.3px;line-height:12px;color:#fff;">29 Mar 18:30</div>
<div class="t" style="left:807px;top:466px;font-size:9.3px;line-height:12px;color:#fff;">29 Mar 20:30</div>
<div class="t" style="left:871px;top:466px;font-size:9.3px;line-height:12px;color:#fff;">29 Mar 22:30</div>
<div class="t" style="left:619px;top:334px;font-size:9.3px;line-height:12px;color:#fff;background:#000;padding:0 1px;">GBPUSD,M15&nbsp; 1.5203 1.5205 1.5189 1.5201</div>
<div style="left:934px;top:356px;width:36px;height:12px;background:#fff;"></div>
<div class="t" style="left:937.5px;top:356px;font-size:9.3px;line-height:12px;color:#000;">1.5201</div>
<div style="left:222px;top:490px;width:763px;height:23px;background:#f0f0f0;"></div>
<div style="left:222px;top:493px;width:763px;height:1px;background:#000;"></div>
<div style="left:222px;top:490px;width:1px;height:23px;background:#a0a0a0;"></div>
<div style="left:226px;top:493px;width:88px;height:19px;background:#fff;border:1px solid #000;border-top:none;"></div>
<div class="t" style="left:236.5px;top:497px;font-size:10px;line-height:12px;transform:scaleX(1.0053);transform-origin:0 0;">EURUSD,M15</div>
<div class="t" style="left:325px;top:497px;font-size:10px;line-height:12px;color:#666;transform:scaleX(1.0737);transform-origin:0 0;">#AAPL,M15</div>
<div style="left:394px;top:497px;width:1px;height:12px;background:#888"></div>
<div class="t" style="left:403.5px;top:497px;font-size:10px;line-height:12px;color:#666;transform:scaleX(1.0265);transform-origin:0 0;">USDJPY,M15</div>
<div style="left:478px;top:497px;width:1px;height:12px;background:#888"></div>
<div class="t" style="left:487px;top:497px;font-size:10px;line-height:12px;color:#666;transform:scaleX(0.9897);transform-origin:0 0;">GBPUSD,M15</div>
<div style="left:563px;top:497px;width:1px;height:12px;background:#888"></div>
<svg style="left:955px;top:500px" width="30" height="8"><path d="M4 0 L0 3.5 L4 7 Z M18 0 L22 3.5 L18 7 Z" fill="#8a8a8a"/></svg>
<div style="left:8px;top:512px;width:976px;height:1px;background:#a0a0a0"></div>
<svg style="left:12px;top:520px" width="7" height="6"><path d="M.8 .8 L6.2 5.2 M6.2 .8 L.8 5.2" stroke="#000" stroke-width="1.7"/></svg>
<div style="left:9px;top:531px;width:13px;height:101px;background:linear-gradient(90deg,#c5d5e8,#dde7f2);"></div>
<div class="t" style="left:-25px;top:601px;width:80px;height:13px;transform:rotate(-90deg);font-size:12px;line-height:13px;color:#666;text-align:center"><span style="display:inline-block;transform:scaleX(0.9)">Терминал</span></div>
<div style="left:23px;top:517px;width:958px;height:96px;background:#fff;border:1px solid #828790;border-bottom:none;border-right:none;"></div>
<div style="left:24px;top:518px;width:940px;height:25px;background:linear-gradient(#fff 0%,#fff 40%,#f3f4f6 41%,#f3f4f6 100%);border-bottom:1px solid #d0d0d0;"></div>
<div style="left:172px;top:518px;width:1px;height:24px;background:#e2e3e5"></div>
<div class="t" style="left:30px;top:524px;font-size:12px;line-height:14px;transform:scaleX(0.9418);transform-origin:0 0;">Время</div>
<div class="t" style="left:178px;top:524px;font-size:12px;line-height:14px;">Тема</div>
<div style="left:24px;top:542px;width:940px;height:71px;overflow:hidden">
<div style="left:0;top:0px;width:940px;height:20px;background:#e9e9e9;border-bottom:1px solid #dcdcdc"></div>
<div style="left:148px;top:0px;width:1px;height:20px;background:#e0e0e0"></div>
<svg style="left:5px;top:4px" width="12" height="12" viewBox="0 0 12 12">
<rect x=".5" y=".5" width="11" height="11" rx="1.5" fill="#f2c230" stroke="#b58a12"/>
<path d="M3 3.5 h6 M3 6 h6 M3 8.5 h4" stroke="#9a7208" stroke-width=".9"/></svg>
<div class="t" style="left:22px;top:3px;font-size:12px;line-height:14px;transform:scaleX(0.9218);transform-origin:0 0;">2013/03/29 21:13:19</div>
<div class="t" style="left:154px;top:3px;font-size:12px;line-height:14px;transform:scaleX(0.9046);transform-origin:0 0;">UPDATE: Tokyo Gas To Buy 25% Stake in Texas Shale Gas Project</div>
<div style="left:0;top:20px;width:940px;height:20px;background:#fff;border-bottom:1px solid #dcdcdc"></div>
<div style="left:148px;top:20px;width:1px;height:20px;background:#e0e0e0"></div>
<svg style="left:5px;top:24px" width="12" height="12" viewBox="0 0 12 12">
<rect x=".5" y=".5" width="11" height="11" rx="1.5" fill="#f2c230" stroke="#b58a12"/>
<path d="M3 3.5 h6 M3 6 h6 M3 8.5 h4" stroke="#9a7208" stroke-width=".9"/></svg>
<div class="t" style="left:22px;top:23px;font-size:12px;line-height:14px;transform:scaleX(0.9218);transform-origin:0 0;">2013/03/29 21:13:18</div>
<div class="t" style="left:154px;top:23px;font-size:12px;line-height:14px;transform:scaleX(0.8952);transform-origin:0 0;">PRESS RELEASE: S&amp;P Lowers Rtg To 'BBB-' On Harris Cnty MUD #217, TX Debt</div>
<div style="left:0;top:40px;width:940px;height:20px;background:#e9e9e9;border-bottom:1px solid #dcdcdc"></div>
<div style="left:148px;top:40px;width:1px;height:20px;background:#e0e0e0"></div>
<svg style="left:5px;top:44px" width="12" height="12" viewBox="0 0 12 12">
<rect x=".5" y=".5" width="11" height="11" rx="1.5" fill="#f2c230" stroke="#b58a12"/>
<path d="M3 3.5 h6 M3 6 h6 M3 8.5 h4" stroke="#9a7208" stroke-width=".9"/></svg>
<div class="t" style="left:22px;top:43px;font-size:12px;line-height:14px;transform:scaleX(0.9218);transform-origin:0 0;">2013/03/29 21:13:17</div>
<div class="t" style="left:154px;top:43px;font-size:12px;line-height:14px;transform:scaleX(0.9302);transform-origin:0 0;">S&amp;P Lowers Rtg To 'BBB-' On Harris Cnty MUD #217, TX Debt</div>
<div style="left:0;top:60px;width:940px;height:20px;background:#fff;border-bottom:1px solid #dcdcdc"></div>
<div style="left:148px;top:60px;width:1px;height:20px;background:#e0e0e0"></div>
<svg style="left:5px;top:64px" width="12" height="12" viewBox="0 0 12 12">
<rect x=".5" y=".5" width="11" height="11" rx="1.5" fill="#f2c230" stroke="#b58a12"/>
<path d="M3 3.5 h6 M3 6 h6 M3 8.5 h4" stroke="#9a7208" stroke-width=".9"/></svg>
<div class="t" style="left:22px;top:63px;font-size:12px;line-height:14px;transform:scaleX(0.9218);transform-origin:0 0;">2013/03/29 21:13:15</div>
<div class="t" style="left:154px;top:63px;font-size:12px;line-height:14px;transform:scaleX(0.8965);transform-origin:0 0;">PRESS RELEASE: S&amp;P Take Various Actions On Six Small Basket Transactions</div>
</div>
<div style="left:24px;top:542px;width:940px;height:1px;background:#d0d0d0"></div>
<div style="left:964px;top:518px;width:17px;height:95px;background:#f0f0f0;"></div>
<svg style="left:969px;top:525px" width="8" height="5"><path d="M0 4 L3.5 0 L7 4 Z" fill="#333"/></svg>
<div style="left:965px;top:537px;width:14px;height:14px;background:linear-gradient(90deg,#f4f4f4 0%,#ececec 45%,#d8d8d8 55%,#d0d0d0 100%);border:1px solid #8a8a8a;border-radius:2px;"></div>
<svg style="left:969px;top:604px" width="8" height="5"><path d="M0 0 L3.5 4 L7 0 Z" fill="#333"/></svg>
<div style="left:23px;top:613px;width:959px;height:20px;border-top:1px solid #000;background:#f0f0f0;"></div>
<div style="left:189px;top:613px;width:62px;height:18px;background:#fff;border:1px solid #000;border-top:none;"></div>
<div class="t" style="left:35px;top:617px;font-size:12px;line-height:14px;color:#666;transform:scaleX(0.9655);transform-origin:0 0;">Торговля</div>
<div class="t" style="left:101.5px;top:617px;font-size:12px;line-height:14px;color:#666;transform:scaleX(0.9305);transform-origin:0 0;">История Счета</div>
<div class="t" style="left:259.3px;top:617px;font-size:12px;line-height:14px;color:#666;transform:scaleX(0.9492);transform-origin:0 0;">Сигналы</div>
<div class="t" style="left:323.5px;top:617px;font-size:12px;line-height:14px;color:#666;transform:scaleX(0.9656);transform-origin:0 0;">Почтовый ящик</div>
<div class="t" style="left:425.3px;top:617px;font-size:12px;line-height:14px;color:#666;transform:scaleX(1.0612);transform-origin:0 0;">Эксперты</div>
<div class="t" style="left:495px;top:617px;font-size:12px;line-height:14px;color:#666;transform:scaleX(0.9181);transform-origin:0 0;">Журнал</div>
<div style="left:92px;top:616px;width:1px;height:13px;background:#888"></div>
<div style="left:315px;top:616px;width:1px;height:13px;background:#888"></div>
<div style="left:416px;top:616px;width:1px;height:13px;background:#888"></div>
<div style="left:489px;top:616px;width:1px;height:13px;background:#888"></div>
<div style="left:545px;top:616px;width:1px;height:13px;background:#888"></div>
<div class="t" style="left:197.8px;top:616px;font-size:12px;line-height:14px;transform:scaleX(0.9364);transform-origin:0 0;">Новости</div>
<div style="left:8px;top:636px;width:976px;height:1px;background:#a0a0a0"></div>
<div style="left:8px;top:637px;width:976px;height:1px;background:#fff"></div>
<div style="left:8px;top:638px;width:976px;height:20px;background:#f0f0f0;"></div>
<div class="t" style="left:10px;top:642px;font-size:12px;line-height:14px;transform:scaleX(0.9635);transform-origin:0 0;">Для справки, нажмите F1</div>
<div class="t" style="left:262.8px;top:642px;font-size:12px;line-height:14px;transform:scaleX(0.9329);transform-origin:0 0;">IFX One Click Trading</div>
<div style="left:258px;top:640px;width:1px;height:17px;background:#c8c8c8"></div>
<div style="left:373px;top:640px;width:1px;height:17px;background:#c8c8c8"></div>
<div style="left:547px;top:640px;width:1px;height:17px;background:#c8c8c8"></div>
<div style="left:618px;top:640px;width:1px;height:17px;background:#c8c8c8"></div>
<div style="left:686px;top:640px;width:1px;height:17px;background:#c8c8c8"></div>
<div style="left:755px;top:640px;width:1px;height:17px;background:#c8c8c8"></div>
<div style="left:822px;top:640px;width:1px;height:17px;background:#c8c8c8"></div>
<svg style="left:828px;top:643px" width="24" height="12"><rect x="0" y="0" width="2" height="9" fill="#4d6b00"/><rect x="0" y="10" width="2" height="2" fill="#00284f"/><rect x="3" y="0" width="2" height="8" fill="#4d6b00"/><rect x="3" y="9" width="2" height="3" fill="#00284f"/><rect x="6" y="0" width="2" height="7" fill="#4d6b00"/><rect x="6" y="8" width="2" height="4" fill="#00284f"/><rect x="9" y="0" width="2" height="6" fill="#4d6b00"/><rect x="9" y="7" width="2" height="5" fill="#00284f"/><rect x="12" y="0" width="2" height="5" fill="#4d6b00"/><rect x="12" y="6" width="2" height="6" fill="#00284f"/><rect x="15" y="0" width="2" height="4" fill="#4d6b00"/><rect x="15" y="5" width="2" height="7" fill="#00284f"/><rect x="18" y="0" width="2" height="3" fill="#4d6b00"/><rect x="18" y="4" width="2" height="8" fill="#00284f"/><rect x="21" y="0" width="2" height="2" fill="#4d6b00"/><rect x="21" y="3" width="2" height="9" fill="#00284f"/></svg>
<div class="t" style="left:888.5px;top:642px;font-size:12px;line-height:14px;transform:scaleX(0.9514);transform-origin:0 0;">519/8 kb</div>
<svg style="left:968px;top:642px" width="16" height="16"><path d="M16 0 L0 16 M16 4 L4 16 M16 8 L8 16 M16 12 L12 16" stroke="#8c8c8c" stroke-width="1.3"/></svg>
</body></html>
